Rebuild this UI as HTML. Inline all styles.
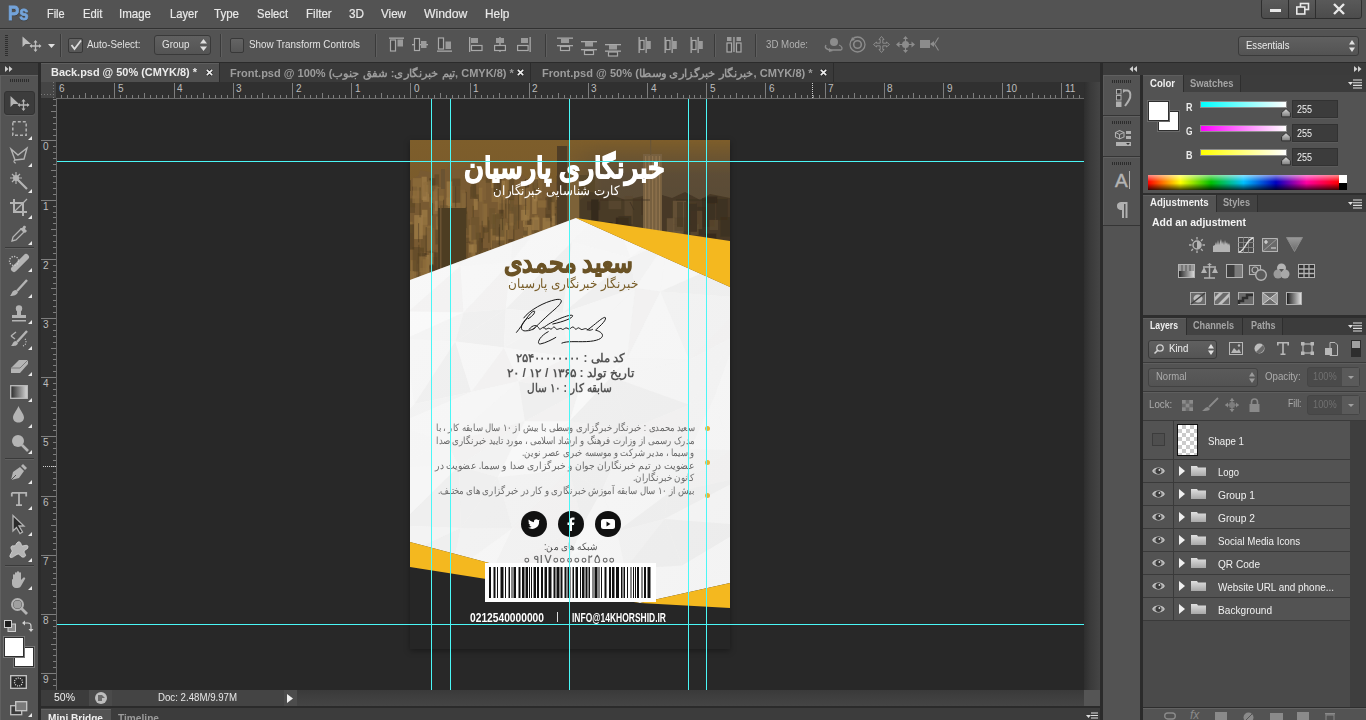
<!DOCTYPE html>
<html><head><meta charset="utf-8">
<style>
*{margin:0;padding:0;box-sizing:border-box}
html,body{width:1366px;height:720px;overflow:hidden;background:#535353;font-family:"Liberation Sans",sans-serif;color:#e6e6e6}
.a{position:absolute}
.t{position:absolute;white-space:nowrap;font-size:12px;line-height:14px}
svg.s{position:absolute;overflow:visible}
</style></head><body>
<div class="a" style="left:0px;top:0px;width:1366px;height:28px;background:#535353;"></div>
<div class="t" style="left:7.5px;top:1.5px;font-size:20px;line-height:23px;color:#74a4da;font-weight:bold;transform:scaleX(0.838);transform-origin:0 0;-webkit-text-stroke:0.8px #74a4da;text-shadow:0 1px 1px #333">Ps</div>
<div class="t" style="left:47px;top:7px;font-size:13px;line-height:14px;color:#e8e8e8;transform:scaleX(0.840);transform-origin:0 0;-webkit-text-stroke:0.2px #e8e8e8">File</div>
<div class="t" style="left:82.5px;top:7px;font-size:13px;line-height:14px;color:#e8e8e8;transform:scaleX(0.866);transform-origin:0 0;-webkit-text-stroke:0.2px #e8e8e8">Edit</div>
<div class="t" style="left:119px;top:7px;font-size:13px;line-height:14px;color:#e8e8e8;transform:scaleX(0.886);transform-origin:0 0;-webkit-text-stroke:0.2px #e8e8e8">Image</div>
<div class="t" style="left:169.5px;top:7px;font-size:13px;line-height:14px;color:#e8e8e8;transform:scaleX(0.861);transform-origin:0 0;-webkit-text-stroke:0.2px #e8e8e8">Layer</div>
<div class="t" style="left:214px;top:7px;font-size:13px;line-height:14px;color:#e8e8e8;transform:scaleX(0.887);transform-origin:0 0;-webkit-text-stroke:0.2px #e8e8e8">Type</div>
<div class="t" style="left:257px;top:7px;font-size:13px;line-height:14px;color:#e8e8e8;transform:scaleX(0.858);transform-origin:0 0;-webkit-text-stroke:0.2px #e8e8e8">Select</div>
<div class="t" style="left:306.3px;top:7px;font-size:13px;line-height:14px;color:#e8e8e8;transform:scaleX(0.890);transform-origin:0 0;-webkit-text-stroke:0.2px #e8e8e8">Filter</div>
<div class="t" style="left:349px;top:7px;font-size:13px;line-height:14px;color:#e8e8e8;transform:scaleX(0.903);transform-origin:0 0;-webkit-text-stroke:0.2px #e8e8e8">3D</div>
<div class="t" style="left:381px;top:7px;font-size:13px;line-height:14px;color:#e8e8e8;transform:scaleX(0.895);transform-origin:0 0;-webkit-text-stroke:0.2px #e8e8e8">View</div>
<div class="t" style="left:424px;top:7px;font-size:13px;line-height:14px;color:#e8e8e8;transform:scaleX(0.939);transform-origin:0 0;-webkit-text-stroke:0.2px #e8e8e8">Window</div>
<div class="t" style="left:485.3px;top:7px;font-size:13px;line-height:14px;color:#e8e8e8;transform:scaleX(0.913);transform-origin:0 0;-webkit-text-stroke:0.2px #e8e8e8">Help</div>
<div class="a" style="left:1261px;top:-2px;width:101px;height:21px;border:1px solid #2e2e2e;border-radius:3px;background:linear-gradient(#5a5a5a,#4c4c4c)"></div>
<div class="a" style="left:1288px;top:0px;width:1px;height:18px;background:#2e2e2e;"></div>
<div class="a" style="left:1315px;top:0px;width:1px;height:18px;background:#2e2e2e;"></div>
<div class="a" style="left:1270px;top:9px;width:11px;height:3px;background:#e8e8e8;"></div>
<svg class="s" style="left:1296px;top:3px;" width="13" height="12" viewBox="0 0 13 12"><rect x="4.5" y="0.5" width="8" height="6" fill="none" stroke="#e8e8e8" stroke-width="1.6"/><rect x="0.8" y="4" width="8" height="7" fill="#4f4f4f" stroke="#e8e8e8" stroke-width="1.6"/></svg>
<svg class="s" style="left:1333px;top:4px;" width="12" height="10" viewBox="0 0 12 10"><path d="M1 0L11 10M11 0L1 10" stroke="#e8e8e8" stroke-width="2.4"/></svg>
<div class="a" style="left:0px;top:28px;width:1366px;height:1px;background:#323232;"></div>
<div class="a" style="left:0px;top:29px;width:1366px;height:33px;background:#535353;border-top:1px solid #5e5e5e"></div>
<div class="a" style="left:0px;top:62px;width:1366px;height:1px;background:#2b2b2b;"></div>
<svg class="s" style="left:5px;top:35px;" width="3" height="22" viewBox="0 0 3 22"><rect x="0" y="0" width="3" height="1" fill="#2e2e2e"/><rect x="0" y="2" width="3" height="1" fill="#2e2e2e"/><rect x="0" y="4" width="3" height="1" fill="#2e2e2e"/><rect x="0" y="6" width="3" height="1" fill="#2e2e2e"/><rect x="0" y="8" width="3" height="1" fill="#2e2e2e"/><rect x="0" y="10" width="3" height="1" fill="#2e2e2e"/><rect x="0" y="12" width="3" height="1" fill="#2e2e2e"/><rect x="0" y="14" width="3" height="1" fill="#2e2e2e"/><rect x="0" y="16" width="3" height="1" fill="#2e2e2e"/><rect x="0" y="18" width="3" height="1" fill="#2e2e2e"/><rect x="0" y="20" width="3" height="1" fill="#2e2e2e"/></svg>
<svg class="s" style="left:22px;top:36px;" width="20" height="16" viewBox="0 0 20 16"><path d="M0.5 0.5L0.5 11L3.5 8L9 8Z" fill="#bdbdbd"/><path d="M13.5 5V15M8.5 10H18.5" stroke="#bdbdbd" stroke-width="1.3"/><path d="M13.5 4L11.5 6.5H15.5ZM13.5 16L11.5 13.5H15.5ZM7.5 10L10 8V12ZM19.5 10L17 8V12Z" fill="#bdbdbd"/></svg>
<svg class="s" style="left:48px;top:44px;" width="7" height="4" viewBox="0 0 7 4"><path d="M0 0H7L3.5 4Z" fill="#e0e0e0"/></svg>
<div class="a" style="left:60px;top:34px;width:1px;height:23px;background:#3a3a3a;box-shadow:1px 0 0 #5f5f5f"></div>
<div class="a" style="left:220px;top:34px;width:1px;height:23px;background:#3a3a3a;box-shadow:1px 0 0 #5f5f5f"></div>
<div class="a" style="left:375px;top:34px;width:1px;height:23px;background:#3a3a3a;box-shadow:1px 0 0 #5f5f5f"></div>
<div class="a" style="left:545px;top:34px;width:1px;height:23px;background:#3a3a3a;box-shadow:1px 0 0 #5f5f5f"></div>
<div class="a" style="left:714px;top:34px;width:1px;height:23px;background:#3a3a3a;box-shadow:1px 0 0 #5f5f5f"></div>
<div class="a" style="left:755px;top:34px;width:1px;height:23px;background:#3a3a3a;box-shadow:1px 0 0 #5f5f5f"></div>
<div class="a" style="left:68px;top:38px;width:15px;height:15px;background:linear-gradient(#646464,#565656);border:1px solid #383838;border-radius:2px"></div>
<svg class="s" style="left:70px;top:39px;" width="12" height="12" viewBox="0 0 12 12"><path d="M1.5 6L4.5 10L11 1.5" fill="none" stroke="#dcdcdc" stroke-width="1.8"/></svg>
<div class="t" style="left:87px;top:37.86px;font-size:10.5px;line-height:13px;color:#e2e2e2;transform:scaleX(0.935);transform-origin:0 0;">Auto-Select:</div>
<div class="a" style="left:154px;top:35px;width:57px;height:20px;background:linear-gradient(#606060,#545454);border:1px solid #393939;border-radius:3px"></div>
<div class="t" style="left:162px;top:37.86px;font-size:10.5px;line-height:13px;color:#e2e2e2;transform:scaleX(0.942);transform-origin:0 0;">Group</div>
<svg class="s" style="left:200px;top:39px;" width="7" height="12" viewBox="0 0 7 12"><path d="M0 4.5L3.5 0L7 4.5ZM0 7.5L3.5 12L7 7.5Z" fill="#e0e0e0"/></svg>
<div class="a" style="left:230px;top:38px;width:14px;height:15px;background:linear-gradient(#646464,#565656);border:1px solid #383838;border-radius:2px"></div>
<div class="t" style="left:249px;top:37.86px;font-size:10.5px;line-height:13px;color:#e2e2e2;transform:scaleX(0.937);transform-origin:0 0;">Show Transform Controls</div>
<svg class="s" style="left:389px;top:37px;" width="15" height="15" viewBox="0 0 15 15"><rect x="0" y="0.5" width="15" height="1.3" fill="#a9a9a9"/><rect x="1.5" y="3" width="5" height="11" fill="#474747" stroke="#a9a9a9" stroke-width="1.2"/><rect x="8.5" y="2.5" width="5.5" height="7" fill="#9a9a9a"/></svg>
<svg class="s" style="left:412px;top:37px;" width="16" height="15" viewBox="0 0 16 15"><rect x="0" y="7" width="16" height="1.3" fill="#a9a9a9"/><rect x="2.5" y="1.5" width="5" height="12" fill="#474747" stroke="#a9a9a9" stroke-width="1.2"/><rect x="9" y="4" width="5.5" height="7" fill="#9a9a9a"/></svg>
<svg class="s" style="left:437px;top:37px;" width="15" height="15" viewBox="0 0 15 15"><rect x="0" y="13.5" width="15" height="1.3" fill="#a9a9a9"/><rect x="1.5" y="1" width="5" height="11" fill="#474747" stroke="#a9a9a9" stroke-width="1.2"/><rect x="8.5" y="4.5" width="5.5" height="7.5" fill="#9a9a9a"/></svg>
<svg class="s" style="left:469px;top:37px;" width="14" height="15" viewBox="0 0 14 15"><rect x="0" y="0" width="1.3" height="15" fill="#a9a9a9"/><rect x="2" y="1" width="7" height="5" fill="#9a9a9a"/><rect x="2.5" y="8.5" width="10.5" height="5" fill="#474747" stroke="#a9a9a9" stroke-width="1.2"/></svg>
<svg class="s" style="left:494px;top:37px;" width="12" height="15" viewBox="0 0 12 15"><rect x="5.3" y="0" width="1.3" height="15" fill="#a9a9a9"/><rect x="2" y="1" width="8" height="5" fill="#9a9a9a"/><rect x="0.6" y="8.5" width="10.8" height="5" fill="#474747" stroke="#a9a9a9" stroke-width="1.2"/></svg>
<svg class="s" style="left:517px;top:37px;" width="14" height="15" viewBox="0 0 14 15"><rect x="12.5" y="0" width="1.3" height="15" fill="#a9a9a9"/><rect x="4" y="1" width="7" height="5" fill="#9a9a9a"/><rect x="0.6" y="8.5" width="10.5" height="5" fill="#474747" stroke="#a9a9a9" stroke-width="1.2"/></svg>
<svg class="s" style="left:557px;top:37px;" width="16" height="15" viewBox="0 0 16 15"><rect x="0" y="0.5" width="16" height="1.3" fill="#a9a9a9"/><rect x="4" y="1.5" width="8" height="4.5" fill="#9a9a9a"/><rect x="0" y="8" width="16" height="1.3" fill="#a9a9a9"/><rect x="3.5" y="9.5" width="9" height="4" fill="#474747" stroke="#a9a9a9" stroke-width="1.2"/></svg>
<svg class="s" style="left:581px;top:37px;" width="16" height="15" viewBox="0 0 16 15"><rect x="0" y="4" width="16" height="1.3" fill="#a9a9a9"/><rect x="4" y="5" width="8" height="4.5" fill="#9a9a9a"/><rect x="0" y="12" width="16" height="1.3" fill="#a9a9a9"/><rect x="3.5" y="13.5" width="9" height="4" fill="#474747" stroke="#a9a9a9" stroke-width="1.2"/></svg>
<svg class="s" style="left:605px;top:37px;" width="16" height="15" viewBox="0 0 16 15"><rect x="0" y="7" width="16" height="1.3" fill="#a9a9a9"/><rect x="4" y="8" width="8" height="4.5" fill="#9a9a9a"/><rect x="0" y="13.5" width="16" height="1.3" fill="#a9a9a9"/><rect x="3.5" y="15.0" width="9" height="4" fill="#474747" stroke="#a9a9a9" stroke-width="1.2"/></svg>
<svg class="s" style="left:638px;top:37px;" width="14" height="16" viewBox="0 0 14 16"><rect x="0.5" y="0" width="1.3" height="16" fill="#a9a9a9"/><rect x="2.0" y="3.5" width="4" height="9" fill="#474747" stroke="#a9a9a9" stroke-width="1.2"/><rect x="7.5" y="0" width="1.3" height="16" fill="#a9a9a9"/><rect x="8.8" y="4" width="4" height="8" fill="#9a9a9a"/></svg>
<svg class="s" style="left:662px;top:37px;" width="14" height="16" viewBox="0 0 14 16"><rect x="2.5" y="0" width="1.3" height="16" fill="#a9a9a9"/><rect x="4.0" y="3.5" width="4" height="9" fill="#474747" stroke="#a9a9a9" stroke-width="1.2"/><rect x="9.5" y="0" width="1.3" height="16" fill="#a9a9a9"/><rect x="10.8" y="4" width="4" height="8" fill="#9a9a9a"/></svg>
<svg class="s" style="left:686px;top:37px;" width="14" height="16" viewBox="0 0 14 16"><rect x="4.5" y="0" width="1.3" height="16" fill="#a9a9a9"/><rect x="6.0" y="3.5" width="4" height="9" fill="#474747" stroke="#a9a9a9" stroke-width="1.2"/><rect x="11.5" y="0" width="1.3" height="16" fill="#a9a9a9"/><rect x="12.8" y="4" width="4" height="8" fill="#9a9a9a"/></svg>
<svg class="s" style="left:726px;top:36px;" width="16" height="17" viewBox="0 0 16 17"><rect x="1" y="1" width="4.5" height="4" fill="#9a9a9a"/><rect x="1" y="7" width="4.5" height="9" fill="#474747" stroke="#a9a9a9" stroke-width="1.2"/><rect x="7.3" y="1" width="1.3" height="15" fill="#a9a9a9"/><rect x="10.5" y="1" width="4.5" height="4" fill="#9a9a9a"/><rect x="10.5" y="7" width="4.5" height="9" fill="#474747" stroke="#a9a9a9" stroke-width="1.2"/></svg>
<div class="t" style="left:766px;top:37.86px;font-size:10.5px;line-height:13px;color:#b0b0b0;transform:scaleX(0.923);transform-origin:0 0;">3D Mode:</div>
<svg class="s" style="left:824px;top:37px;" width="19" height="15" viewBox="0 0 19 15"><circle cx="10" cy="5" r="4" fill="#8c8c8c"/><path d="M2 8C0 11 3 13 8 13L17 13C19 12 18 9 15 8" fill="none" stroke="#8c8c8c" stroke-width="1.3"/><path d="M5 11L9 14L5 15Z" fill="#8c8c8c"/></svg>
<svg class="s" style="left:849px;top:36px;" width="17" height="17" viewBox="0 0 17 17"><circle cx="8.5" cy="8.5" r="7.5" fill="none" stroke="#8c8c8c" stroke-width="1.3"/><circle cx="8.5" cy="8.5" r="3.8" fill="none" stroke="#8c8c8c" stroke-width="1.6"/><path d="M3 1L6 4L2 5Z" fill="#8c8c8c"/></svg>
<svg class="s" style="left:873px;top:36px;" width="17" height="17" viewBox="0 0 17 17"><path d="M8.5 0.5L11 3.5H9.8V7.2H13.5V6L16.5 8.5L13.5 11V9.8H9.8V13.5H11L8.5 16.5L6 13.5H7.2V9.8H3.5V11L0.5 8.5L3.5 6V7.2H7.2V3.5H6Z" fill="none" stroke="#8c8c8c" stroke-width="1"/></svg>
<svg class="s" style="left:896px;top:36px;" width="19" height="17" viewBox="0 0 19 17"><circle cx="9.5" cy="8.5" r="3.5" fill="#8c8c8c"/><path d="M9.5 0L12 3H7ZM9.5 17L12 14H7ZM0 8.5L3.5 5.5V11.5ZM19 8.5L15.5 5.5V11.5Z" fill="#8c8c8c"/><path d="M3 8.5H16M9.5 2V15" stroke="#8c8c8c" stroke-width="1.2"/></svg>
<svg class="s" style="left:920px;top:37px;" width="19" height="15" viewBox="0 0 19 15"><rect x="0" y="3" width="10" height="8" fill="#8c8c8c"/><path d="M10 7L14 4V10Z" fill="#8c8c8c"/><path d="M18.5 0.5L14.5 7L18.5 13.5" fill="none" stroke="#8c8c8c" stroke-width="1.1"/></svg>
<div class="a" style="left:1238px;top:36px;width:121px;height:20px;background:linear-gradient(#606060,#535353);border:1px solid #3a3a3a;border-radius:3px"></div>
<div class="t" style="left:1246px;top:38.86px;font-size:10.5px;line-height:13px;color:#ececec;transform:scaleX(0.909);transform-origin:0 0;">Essentials</div>
<svg class="s" style="left:1349px;top:40px;" width="6" height="12" viewBox="0 0 6 12"><path d="M0 4.5L3 0L6 4.5ZM0 7.5L3 12L6 7.5Z" fill="#e0e0e0"/></svg>
<div class="a" style="left:38px;top:63px;width:3px;height:657px;background:#2b2b2b;"></div>
<div class="a" style="left:1100px;top:63px;width:3px;height:657px;background:#2b2b2b;"></div>
<div class="a" style="left:41px;top:63px;width:1059px;height:19px;background:#3a3a3a;"></div>
<div class="a" style="left:41px;top:63px;width:178px;height:19px;background:#505050;border-top:1px solid #5e5e5e"></div>
<div class="a" style="left:219px;top:63px;width:1px;height:19px;background:#2c2c2c;"></div>
<div class="a" style="left:530px;top:63px;width:1px;height:19px;background:#2c2c2c;"></div>
<div class="a" style="left:833px;top:63px;width:1px;height:19px;background:#2c2c2c;"></div>
<div class="t" style="left:51px;top:66.36px;font-size:10.5px;line-height:13px;color:#ececec;font-weight:bold;transform:scaleX(1.040);transform-origin:0 0;">Back.psd @ 50% (CMYK/8) *</div>
<svg class="s" style="left:205.5px;top:69px;" width="7" height="7" viewBox="0 0 7 7"><path d="M0.8 0.8L6.2 6.2M6.2 0.8L0.8 6.2" stroke="#1e1e1e" stroke-width="3"/><path d="M0.8 0.8L6.2 6.2M6.2 0.8L0.8 6.2" stroke="#eeeeee" stroke-width="1.7"/></svg>
<div class="t" style="left:230px;top:67.3px;font-size:10.5px;line-height:12px;color:#9c9c9c;font-weight:bold;transform:scaleX(1.047);transform-origin:0 0">Front.psd @ 100% (تیم خبرنگاری: شفق جنوب, CMYK/8) *</div>
<svg class="s" style="left:517px;top:69px;" width="7" height="7" viewBox="0 0 7 7"><path d="M0.8 0.8L6.2 6.2M6.2 0.8L0.8 6.2" stroke="#1e1e1e" stroke-width="3"/><path d="M0.8 0.8L6.2 6.2M6.2 0.8L0.8 6.2" stroke="#eeeeee" stroke-width="1.7"/></svg>
<div class="t" style="left:542px;top:67.3px;font-size:10.5px;line-height:12px;color:#9c9c9c;font-weight:bold;transform:scaleX(1.054);transform-origin:0 0">Front.psd @ 50% (خبرنگار خبرگزاری وسطا, CMYK/8) *</div>
<svg class="s" style="left:820px;top:69px;" width="7" height="7" viewBox="0 0 7 7"><path d="M0.8 0.8L6.2 6.2M6.2 0.8L0.8 6.2" stroke="#1e1e1e" stroke-width="3"/><path d="M0.8 0.8L6.2 6.2M6.2 0.8L0.8 6.2" stroke="#eeeeee" stroke-width="1.7"/></svg>
<div class="a" style="left:41px;top:82px;width:1043px;height:16px;background:#303030;"></div>
<div class="a" style="left:41px;top:98px;width:15px;height:592px;background:#303030;"></div>
<div class="a" style="left:56px;top:98px;width:1028px;height:1px;background:#6a6a6a;"></div>
<div class="a" style="left:56px;top:98px;width:1px;height:592px;background:#6a6a6a;"></div>
<div class="a" style="left:41px;top:82px;width:15px;height:16px;background:#454545;"></div>
<svg class="s" style="left:41px;top:82px;" width="15" height="16" viewBox="0 0 15 16"><path d="M0 12.5H15M12.5 0V16" stroke="#7a7a7a" stroke-width="1" stroke-dasharray="1 2"/></svg>
<svg class="s" style="left:56px;top:82px;" width="1028" height="16" viewBox="0 0 1028 16"><rect x="5" y="13" width="1" height="3" fill="#7e7e7e"/><rect x="11" y="13" width="1" height="3" fill="#7e7e7e"/><rect x="17" y="13" width="1" height="3" fill="#7e7e7e"/><rect x="23" y="13" width="1" height="3" fill="#7e7e7e"/><rect x="29" y="11" width="1" height="5" fill="#7e7e7e"/><rect x="35" y="13" width="1" height="3" fill="#7e7e7e"/><rect x="41" y="13" width="1" height="3" fill="#7e7e7e"/><rect x="47" y="13" width="1" height="3" fill="#7e7e7e"/><rect x="53" y="13" width="1" height="3" fill="#7e7e7e"/><rect x="58" y="1" width="1" height="15" fill="#7e7e7e"/><rect x="64" y="13" width="1" height="3" fill="#7e7e7e"/><rect x="70" y="13" width="1" height="3" fill="#7e7e7e"/><rect x="76" y="13" width="1" height="3" fill="#7e7e7e"/><rect x="82" y="13" width="1" height="3" fill="#7e7e7e"/><rect x="88" y="11" width="1" height="5" fill="#7e7e7e"/><rect x="94" y="13" width="1" height="3" fill="#7e7e7e"/><rect x="100" y="13" width="1" height="3" fill="#7e7e7e"/><rect x="106" y="13" width="1" height="3" fill="#7e7e7e"/><rect x="112" y="13" width="1" height="3" fill="#7e7e7e"/><rect x="118" y="1" width="1" height="15" fill="#7e7e7e"/><rect x="124" y="13" width="1" height="3" fill="#7e7e7e"/><rect x="130" y="13" width="1" height="3" fill="#7e7e7e"/><rect x="135" y="13" width="1" height="3" fill="#7e7e7e"/><rect x="141" y="13" width="1" height="3" fill="#7e7e7e"/><rect x="147" y="11" width="1" height="5" fill="#7e7e7e"/><rect x="153" y="13" width="1" height="3" fill="#7e7e7e"/><rect x="159" y="13" width="1" height="3" fill="#7e7e7e"/><rect x="165" y="13" width="1" height="3" fill="#7e7e7e"/><rect x="171" y="13" width="1" height="3" fill="#7e7e7e"/><rect x="177" y="1" width="1" height="15" fill="#7e7e7e"/><rect x="183" y="13" width="1" height="3" fill="#7e7e7e"/><rect x="189" y="13" width="1" height="3" fill="#7e7e7e"/><rect x="195" y="13" width="1" height="3" fill="#7e7e7e"/><rect x="201" y="13" width="1" height="3" fill="#7e7e7e"/><rect x="206" y="11" width="1" height="5" fill="#7e7e7e"/><rect x="212" y="13" width="1" height="3" fill="#7e7e7e"/><rect x="218" y="13" width="1" height="3" fill="#7e7e7e"/><rect x="224" y="13" width="1" height="3" fill="#7e7e7e"/><rect x="230" y="13" width="1" height="3" fill="#7e7e7e"/><rect x="236" y="1" width="1" height="15" fill="#7e7e7e"/><rect x="242" y="13" width="1" height="3" fill="#7e7e7e"/><rect x="248" y="13" width="1" height="3" fill="#7e7e7e"/><rect x="254" y="13" width="1" height="3" fill="#7e7e7e"/><rect x="260" y="13" width="1" height="3" fill="#7e7e7e"/><rect x="266" y="11" width="1" height="5" fill="#7e7e7e"/><rect x="272" y="13" width="1" height="3" fill="#7e7e7e"/><rect x="277" y="13" width="1" height="3" fill="#7e7e7e"/><rect x="283" y="13" width="1" height="3" fill="#7e7e7e"/><rect x="289" y="13" width="1" height="3" fill="#7e7e7e"/><rect x="295" y="1" width="1" height="15" fill="#7e7e7e"/><rect x="301" y="13" width="1" height="3" fill="#7e7e7e"/><rect x="307" y="13" width="1" height="3" fill="#7e7e7e"/><rect x="313" y="13" width="1" height="3" fill="#7e7e7e"/><rect x="319" y="13" width="1" height="3" fill="#7e7e7e"/><rect x="325" y="11" width="1" height="5" fill="#7e7e7e"/><rect x="331" y="13" width="1" height="3" fill="#7e7e7e"/><rect x="337" y="13" width="1" height="3" fill="#7e7e7e"/><rect x="343" y="13" width="1" height="3" fill="#7e7e7e"/><rect x="348" y="13" width="1" height="3" fill="#7e7e7e"/><rect x="354" y="1" width="1" height="15" fill="#7e7e7e"/><rect x="360" y="13" width="1" height="3" fill="#7e7e7e"/><rect x="366" y="13" width="1" height="3" fill="#7e7e7e"/><rect x="372" y="13" width="1" height="3" fill="#7e7e7e"/><rect x="378" y="13" width="1" height="3" fill="#7e7e7e"/><rect x="384" y="11" width="1" height="5" fill="#7e7e7e"/><rect x="390" y="13" width="1" height="3" fill="#7e7e7e"/><rect x="396" y="13" width="1" height="3" fill="#7e7e7e"/><rect x="402" y="13" width="1" height="3" fill="#7e7e7e"/><rect x="408" y="13" width="1" height="3" fill="#7e7e7e"/><rect x="414" y="1" width="1" height="15" fill="#7e7e7e"/><rect x="419" y="13" width="1" height="3" fill="#7e7e7e"/><rect x="425" y="13" width="1" height="3" fill="#7e7e7e"/><rect x="431" y="13" width="1" height="3" fill="#7e7e7e"/><rect x="437" y="13" width="1" height="3" fill="#7e7e7e"/><rect x="443" y="11" width="1" height="5" fill="#7e7e7e"/><rect x="449" y="13" width="1" height="3" fill="#7e7e7e"/><rect x="455" y="13" width="1" height="3" fill="#7e7e7e"/><rect x="461" y="13" width="1" height="3" fill="#7e7e7e"/><rect x="467" y="13" width="1" height="3" fill="#7e7e7e"/><rect x="473" y="1" width="1" height="15" fill="#7e7e7e"/><rect x="479" y="13" width="1" height="3" fill="#7e7e7e"/><rect x="485" y="13" width="1" height="3" fill="#7e7e7e"/><rect x="491" y="13" width="1" height="3" fill="#7e7e7e"/><rect x="496" y="13" width="1" height="3" fill="#7e7e7e"/><rect x="502" y="11" width="1" height="5" fill="#7e7e7e"/><rect x="508" y="13" width="1" height="3" fill="#7e7e7e"/><rect x="514" y="13" width="1" height="3" fill="#7e7e7e"/><rect x="520" y="13" width="1" height="3" fill="#7e7e7e"/><rect x="526" y="13" width="1" height="3" fill="#7e7e7e"/><rect x="532" y="1" width="1" height="15" fill="#7e7e7e"/><rect x="538" y="13" width="1" height="3" fill="#7e7e7e"/><rect x="544" y="13" width="1" height="3" fill="#7e7e7e"/><rect x="550" y="13" width="1" height="3" fill="#7e7e7e"/><rect x="556" y="13" width="1" height="3" fill="#7e7e7e"/><rect x="562" y="11" width="1" height="5" fill="#7e7e7e"/><rect x="567" y="13" width="1" height="3" fill="#7e7e7e"/><rect x="573" y="13" width="1" height="3" fill="#7e7e7e"/><rect x="579" y="13" width="1" height="3" fill="#7e7e7e"/><rect x="585" y="13" width="1" height="3" fill="#7e7e7e"/><rect x="591" y="1" width="1" height="15" fill="#7e7e7e"/><rect x="597" y="13" width="1" height="3" fill="#7e7e7e"/><rect x="603" y="13" width="1" height="3" fill="#7e7e7e"/><rect x="609" y="13" width="1" height="3" fill="#7e7e7e"/><rect x="615" y="13" width="1" height="3" fill="#7e7e7e"/><rect x="621" y="11" width="1" height="5" fill="#7e7e7e"/><rect x="627" y="13" width="1" height="3" fill="#7e7e7e"/><rect x="633" y="13" width="1" height="3" fill="#7e7e7e"/><rect x="638" y="13" width="1" height="3" fill="#7e7e7e"/><rect x="644" y="13" width="1" height="3" fill="#7e7e7e"/><rect x="650" y="1" width="1" height="15" fill="#7e7e7e"/><rect x="656" y="13" width="1" height="3" fill="#7e7e7e"/><rect x="662" y="13" width="1" height="3" fill="#7e7e7e"/><rect x="668" y="13" width="1" height="3" fill="#7e7e7e"/><rect x="674" y="13" width="1" height="3" fill="#7e7e7e"/><rect x="680" y="11" width="1" height="5" fill="#7e7e7e"/><rect x="686" y="13" width="1" height="3" fill="#7e7e7e"/><rect x="692" y="13" width="1" height="3" fill="#7e7e7e"/><rect x="698" y="13" width="1" height="3" fill="#7e7e7e"/><rect x="704" y="13" width="1" height="3" fill="#7e7e7e"/><rect x="709" y="1" width="1" height="15" fill="#7e7e7e"/><rect x="715" y="13" width="1" height="3" fill="#7e7e7e"/><rect x="721" y="13" width="1" height="3" fill="#7e7e7e"/><rect x="727" y="13" width="1" height="3" fill="#7e7e7e"/><rect x="733" y="13" width="1" height="3" fill="#7e7e7e"/><rect x="739" y="11" width="1" height="5" fill="#7e7e7e"/><rect x="745" y="13" width="1" height="3" fill="#7e7e7e"/><rect x="751" y="13" width="1" height="3" fill="#7e7e7e"/><rect x="757" y="13" width="1" height="3" fill="#7e7e7e"/><rect x="763" y="13" width="1" height="3" fill="#7e7e7e"/><rect x="769" y="1" width="1" height="15" fill="#7e7e7e"/><rect x="775" y="13" width="1" height="3" fill="#7e7e7e"/><rect x="780" y="13" width="1" height="3" fill="#7e7e7e"/><rect x="786" y="13" width="1" height="3" fill="#7e7e7e"/><rect x="792" y="13" width="1" height="3" fill="#7e7e7e"/><rect x="798" y="11" width="1" height="5" fill="#7e7e7e"/><rect x="804" y="13" width="1" height="3" fill="#7e7e7e"/><rect x="810" y="13" width="1" height="3" fill="#7e7e7e"/><rect x="816" y="13" width="1" height="3" fill="#7e7e7e"/><rect x="822" y="13" width="1" height="3" fill="#7e7e7e"/><rect x="828" y="1" width="1" height="15" fill="#7e7e7e"/><rect x="834" y="13" width="1" height="3" fill="#7e7e7e"/><rect x="840" y="13" width="1" height="3" fill="#7e7e7e"/><rect x="846" y="13" width="1" height="3" fill="#7e7e7e"/><rect x="852" y="13" width="1" height="3" fill="#7e7e7e"/><rect x="857" y="11" width="1" height="5" fill="#7e7e7e"/><rect x="863" y="13" width="1" height="3" fill="#7e7e7e"/><rect x="869" y="13" width="1" height="3" fill="#7e7e7e"/><rect x="875" y="13" width="1" height="3" fill="#7e7e7e"/><rect x="881" y="13" width="1" height="3" fill="#7e7e7e"/><rect x="887" y="1" width="1" height="15" fill="#7e7e7e"/><rect x="893" y="13" width="1" height="3" fill="#7e7e7e"/><rect x="899" y="13" width="1" height="3" fill="#7e7e7e"/><rect x="905" y="13" width="1" height="3" fill="#7e7e7e"/><rect x="911" y="13" width="1" height="3" fill="#7e7e7e"/><rect x="917" y="11" width="1" height="5" fill="#7e7e7e"/><rect x="923" y="13" width="1" height="3" fill="#7e7e7e"/><rect x="928" y="13" width="1" height="3" fill="#7e7e7e"/><rect x="934" y="13" width="1" height="3" fill="#7e7e7e"/><rect x="940" y="13" width="1" height="3" fill="#7e7e7e"/><rect x="946" y="1" width="1" height="15" fill="#7e7e7e"/><rect x="952" y="13" width="1" height="3" fill="#7e7e7e"/><rect x="958" y="13" width="1" height="3" fill="#7e7e7e"/><rect x="964" y="13" width="1" height="3" fill="#7e7e7e"/><rect x="970" y="13" width="1" height="3" fill="#7e7e7e"/><rect x="976" y="11" width="1" height="5" fill="#7e7e7e"/><rect x="982" y="13" width="1" height="3" fill="#7e7e7e"/><rect x="988" y="13" width="1" height="3" fill="#7e7e7e"/><rect x="994" y="13" width="1" height="3" fill="#7e7e7e"/><rect x="999" y="13" width="1" height="3" fill="#7e7e7e"/><rect x="1005" y="1" width="1" height="15" fill="#7e7e7e"/><rect x="1011" y="13" width="1" height="3" fill="#7e7e7e"/><rect x="1017" y="13" width="1" height="3" fill="#7e7e7e"/><rect x="1023" y="13" width="1" height="3" fill="#7e7e7e"/></svg>
<div class="t" style="left:59px;top:83px;font-size:10px;line-height:11px;color:#bcbcbc;">6</div>
<div class="t" style="left:118px;top:83px;font-size:10px;line-height:11px;color:#bcbcbc;">5</div>
<div class="t" style="left:177px;top:83px;font-size:10px;line-height:11px;color:#bcbcbc;">4</div>
<div class="t" style="left:236px;top:83px;font-size:10px;line-height:11px;color:#bcbcbc;">3</div>
<div class="t" style="left:296px;top:83px;font-size:10px;line-height:11px;color:#bcbcbc;">2</div>
<div class="t" style="left:355px;top:83px;font-size:10px;line-height:11px;color:#bcbcbc;">1</div>
<div class="t" style="left:414px;top:83px;font-size:10px;line-height:11px;color:#bcbcbc;">0</div>
<div class="t" style="left:473px;top:83px;font-size:10px;line-height:11px;color:#bcbcbc;">1</div>
<div class="t" style="left:532px;top:83px;font-size:10px;line-height:11px;color:#bcbcbc;">2</div>
<div class="t" style="left:591px;top:83px;font-size:10px;line-height:11px;color:#bcbcbc;">3</div>
<div class="t" style="left:651px;top:83px;font-size:10px;line-height:11px;color:#bcbcbc;">4</div>
<div class="t" style="left:710px;top:83px;font-size:10px;line-height:11px;color:#bcbcbc;">5</div>
<div class="t" style="left:769px;top:83px;font-size:10px;line-height:11px;color:#bcbcbc;">6</div>
<div class="t" style="left:828px;top:83px;font-size:10px;line-height:11px;color:#bcbcbc;">7</div>
<div class="t" style="left:887px;top:83px;font-size:10px;line-height:11px;color:#bcbcbc;">8</div>
<div class="t" style="left:947px;top:83px;font-size:10px;line-height:11px;color:#bcbcbc;">9</div>
<div class="t" style="left:1006px;top:83px;font-size:10px;line-height:11px;color:#bcbcbc;">10</div>
<div class="t" style="left:1065px;top:83px;font-size:10px;line-height:11px;color:#bcbcbc;">11</div>
<svg class="s" style="left:41px;top:98px;" width="15" height="592" viewBox="0 0 15 592"><rect x="12" y="1" width="3" height="1" fill="#7e7e7e"/><rect x="12" y="7" width="3" height="1" fill="#7e7e7e"/><rect x="10" y="13" width="5" height="1" fill="#7e7e7e"/><rect x="12" y="19" width="3" height="1" fill="#7e7e7e"/><rect x="12" y="25" width="3" height="1" fill="#7e7e7e"/><rect x="12" y="31" width="3" height="1" fill="#7e7e7e"/><rect x="12" y="37" width="3" height="1" fill="#7e7e7e"/><rect x="0" y="42" width="15" height="1" fill="#7e7e7e"/><rect x="12" y="48" width="3" height="1" fill="#7e7e7e"/><rect x="12" y="54" width="3" height="1" fill="#7e7e7e"/><rect x="12" y="60" width="3" height="1" fill="#7e7e7e"/><rect x="12" y="66" width="3" height="1" fill="#7e7e7e"/><rect x="10" y="72" width="5" height="1" fill="#7e7e7e"/><rect x="12" y="78" width="3" height="1" fill="#7e7e7e"/><rect x="12" y="84" width="3" height="1" fill="#7e7e7e"/><rect x="12" y="90" width="3" height="1" fill="#7e7e7e"/><rect x="12" y="96" width="3" height="1" fill="#7e7e7e"/><rect x="0" y="102" width="15" height="1" fill="#7e7e7e"/><rect x="12" y="108" width="3" height="1" fill="#7e7e7e"/><rect x="12" y="114" width="3" height="1" fill="#7e7e7e"/><rect x="12" y="119" width="3" height="1" fill="#7e7e7e"/><rect x="12" y="125" width="3" height="1" fill="#7e7e7e"/><rect x="10" y="131" width="5" height="1" fill="#7e7e7e"/><rect x="12" y="137" width="3" height="1" fill="#7e7e7e"/><rect x="12" y="143" width="3" height="1" fill="#7e7e7e"/><rect x="12" y="149" width="3" height="1" fill="#7e7e7e"/><rect x="12" y="155" width="3" height="1" fill="#7e7e7e"/><rect x="0" y="161" width="15" height="1" fill="#7e7e7e"/><rect x="12" y="167" width="3" height="1" fill="#7e7e7e"/><rect x="12" y="173" width="3" height="1" fill="#7e7e7e"/><rect x="12" y="179" width="3" height="1" fill="#7e7e7e"/><rect x="12" y="185" width="3" height="1" fill="#7e7e7e"/><rect x="10" y="190" width="5" height="1" fill="#7e7e7e"/><rect x="12" y="196" width="3" height="1" fill="#7e7e7e"/><rect x="12" y="202" width="3" height="1" fill="#7e7e7e"/><rect x="12" y="208" width="3" height="1" fill="#7e7e7e"/><rect x="12" y="214" width="3" height="1" fill="#7e7e7e"/><rect x="0" y="220" width="15" height="1" fill="#7e7e7e"/><rect x="12" y="226" width="3" height="1" fill="#7e7e7e"/><rect x="12" y="232" width="3" height="1" fill="#7e7e7e"/><rect x="12" y="238" width="3" height="1" fill="#7e7e7e"/><rect x="12" y="244" width="3" height="1" fill="#7e7e7e"/><rect x="10" y="250" width="5" height="1" fill="#7e7e7e"/><rect x="12" y="256" width="3" height="1" fill="#7e7e7e"/><rect x="12" y="261" width="3" height="1" fill="#7e7e7e"/><rect x="12" y="267" width="3" height="1" fill="#7e7e7e"/><rect x="12" y="273" width="3" height="1" fill="#7e7e7e"/><rect x="0" y="279" width="15" height="1" fill="#7e7e7e"/><rect x="12" y="285" width="3" height="1" fill="#7e7e7e"/><rect x="12" y="291" width="3" height="1" fill="#7e7e7e"/><rect x="12" y="297" width="3" height="1" fill="#7e7e7e"/><rect x="12" y="303" width="3" height="1" fill="#7e7e7e"/><rect x="10" y="309" width="5" height="1" fill="#7e7e7e"/><rect x="12" y="315" width="3" height="1" fill="#7e7e7e"/><rect x="12" y="321" width="3" height="1" fill="#7e7e7e"/><rect x="12" y="327" width="3" height="1" fill="#7e7e7e"/><rect x="12" y="332" width="3" height="1" fill="#7e7e7e"/><rect x="0" y="338" width="15" height="1" fill="#7e7e7e"/><rect x="12" y="344" width="3" height="1" fill="#7e7e7e"/><rect x="12" y="350" width="3" height="1" fill="#7e7e7e"/><rect x="12" y="356" width="3" height="1" fill="#7e7e7e"/><rect x="12" y="362" width="3" height="1" fill="#7e7e7e"/><rect x="10" y="368" width="5" height="1" fill="#7e7e7e"/><rect x="12" y="374" width="3" height="1" fill="#7e7e7e"/><rect x="12" y="380" width="3" height="1" fill="#7e7e7e"/><rect x="12" y="386" width="3" height="1" fill="#7e7e7e"/><rect x="12" y="392" width="3" height="1" fill="#7e7e7e"/><rect x="0" y="398" width="15" height="1" fill="#7e7e7e"/><rect x="12" y="403" width="3" height="1" fill="#7e7e7e"/><rect x="12" y="409" width="3" height="1" fill="#7e7e7e"/><rect x="12" y="415" width="3" height="1" fill="#7e7e7e"/><rect x="12" y="421" width="3" height="1" fill="#7e7e7e"/><rect x="10" y="427" width="5" height="1" fill="#7e7e7e"/><rect x="12" y="433" width="3" height="1" fill="#7e7e7e"/><rect x="12" y="439" width="3" height="1" fill="#7e7e7e"/><rect x="12" y="445" width="3" height="1" fill="#7e7e7e"/><rect x="12" y="451" width="3" height="1" fill="#7e7e7e"/><rect x="0" y="457" width="15" height="1" fill="#7e7e7e"/><rect x="12" y="463" width="3" height="1" fill="#7e7e7e"/><rect x="12" y="469" width="3" height="1" fill="#7e7e7e"/><rect x="12" y="475" width="3" height="1" fill="#7e7e7e"/><rect x="12" y="480" width="3" height="1" fill="#7e7e7e"/><rect x="10" y="486" width="5" height="1" fill="#7e7e7e"/><rect x="12" y="492" width="3" height="1" fill="#7e7e7e"/><rect x="12" y="498" width="3" height="1" fill="#7e7e7e"/><rect x="12" y="504" width="3" height="1" fill="#7e7e7e"/><rect x="12" y="510" width="3" height="1" fill="#7e7e7e"/><rect x="0" y="516" width="15" height="1" fill="#7e7e7e"/><rect x="12" y="522" width="3" height="1" fill="#7e7e7e"/><rect x="12" y="528" width="3" height="1" fill="#7e7e7e"/><rect x="12" y="534" width="3" height="1" fill="#7e7e7e"/><rect x="12" y="540" width="3" height="1" fill="#7e7e7e"/><rect x="10" y="546" width="5" height="1" fill="#7e7e7e"/><rect x="12" y="551" width="3" height="1" fill="#7e7e7e"/><rect x="12" y="557" width="3" height="1" fill="#7e7e7e"/><rect x="12" y="563" width="3" height="1" fill="#7e7e7e"/><rect x="12" y="569" width="3" height="1" fill="#7e7e7e"/><rect x="0" y="575" width="15" height="1" fill="#7e7e7e"/><rect x="12" y="581" width="3" height="1" fill="#7e7e7e"/><rect x="12" y="587" width="3" height="1" fill="#7e7e7e"/></svg>
<div class="t" style="left:43px;top:141px;font-size:10px;line-height:11px;color:#bcbcbc;">0</div>
<div class="t" style="left:43px;top:201px;font-size:10px;line-height:11px;color:#bcbcbc;">1</div>
<div class="t" style="left:43px;top:260px;font-size:10px;line-height:11px;color:#bcbcbc;">2</div>
<div class="t" style="left:43px;top:319px;font-size:10px;line-height:11px;color:#bcbcbc;">3</div>
<div class="t" style="left:43px;top:378px;font-size:10px;line-height:11px;color:#bcbcbc;">4</div>
<div class="t" style="left:43px;top:437px;font-size:10px;line-height:11px;color:#bcbcbc;">5</div>
<div class="t" style="left:43px;top:497px;font-size:10px;line-height:11px;color:#bcbcbc;">6</div>
<div class="t" style="left:43px;top:556px;font-size:10px;line-height:11px;color:#bcbcbc;">7</div>
<div class="t" style="left:43px;top:615px;font-size:10px;line-height:11px;color:#bcbcbc;">8</div>
<div class="t" style="left:43px;top:674px;font-size:10px;line-height:11px;color:#bcbcbc;">9</div>
<svg class="s" style="left:43px;top:466px;" width="13" height="1" viewBox="0 0 13 1"><path d="M0 0.5H13" stroke="#d0d0d0" stroke-dasharray="1 1"/></svg>
<svg class="s" style="left:812px;top:83px;" width="1" height="15" viewBox="0 0 1 15"><path d="M0.5 0V15" stroke="#d0d0d0" stroke-dasharray="1 1"/></svg>
<div class="a" style="left:57px;top:99px;width:1027px;height:591px;background:#282828;"></div>
<div class="a" style="left:1084px;top:82px;width:16px;height:608px;background:linear-gradient(90deg,#2e2e2e,#3a3a3a 40%,#454545);"></div>
<div class="a" style="left:297px;top:690px;width:787px;height:16px;background:linear-gradient(#3a3a3a,#454545);"></div>
<div class="a" style="left:1084px;top:690px;width:16px;height:16px;background:#555555;"></div>
<div class="a" style="left:41px;top:690px;width:256px;height:16px;background:#3c3c3c;"></div>
<div class="a" style="left:89px;top:690px;width:23px;height:16px;background:#4a4a4a;"></div>
<div class="a" style="left:112px;top:690px;width:172px;height:16px;background:#444444;"></div>
<div class="a" style="left:284px;top:690px;width:13px;height:16px;background:#4c4c4c;"></div>
<div class="t" style="left:54px;top:691.54px;font-size:10px;line-height:12px;color:#f0f0f0;transform:scaleX(1.049);transform-origin:0 0;">50%</div>
<svg class="s" style="left:95px;top:692px;" width="12" height="12" viewBox="0 0 12 12"><circle cx="6" cy="6" r="6" fill="#bdbdbd"/><path d="M3 9V3H7L10 6H7V9Z" fill="#6a6a6a"/></svg>
<div class="t" style="left:158px;top:691.54px;font-size:10px;line-height:12px;color:#e8e8e8;transform:scaleX(0.967);transform-origin:0 0;">Doc: 2.48M/9.97M</div>
<svg class="s" style="left:287px;top:694px;" width="6" height="9" viewBox="0 0 6 9"><path d="M0 0L6 4.5L0 9Z" fill="#f0f0f0"/></svg>
<div class="a" style="left:41px;top:706px;width:1059px;height:2px;background:#2b2b2b;"></div>
<div class="a" style="left:41px;top:708px;width:1059px;height:12px;background:#3c3c3c;"></div>
<div class="a" style="left:41px;top:709px;width:70px;height:11px;background:#535353;border-top:1px solid #606060"></div>
<div class="t" style="left:48px;top:711.69px;font-size:11px;line-height:13px;color:#f0f0f0;font-weight:bold;transform:scaleX(0.918);transform-origin:0 0;">Mini Bridge</div>
<div class="t" style="left:118px;top:711.69px;font-size:11px;line-height:13px;color:#9a9a9a;font-weight:bold;transform:scaleX(0.923);transform-origin:0 0;">Timeline</div>
<svg class="s" style="left:1086px;top:712px;" width="12" height="8" viewBox="0 0 12 8"><path d="M0 3H5L2.5 6Z" fill="#e0e0e0"/><path d="M5 1H12M5 3.5H12M5 6H12" stroke="#e0e0e0" stroke-width="1.2"/></svg>
<div class="a" style="left:0px;top:63px;width:38px;height:12px;background:#3b3b3b;"></div>
<svg class="s" style="left:5px;top:66px;" width="8" height="6" viewBox="0 0 8 6"><path d="M0 0L3.5 3L0 6ZM4 0L7.5 3L4 6Z" fill="#d0d0d0"/></svg>
<div class="a" style="left:0px;top:75px;width:38px;height:645px;background:#535353;border-left:1px solid #606060;border-top:1px solid #606060"></div>
<svg class="s" style="left:10px;top:79px;" width="20" height="3" viewBox="0 0 20 3"><rect x="0" y="0" width="1" height="3" fill="#2c2c2c"/><rect x="2" y="0" width="1" height="3" fill="#2c2c2c"/><rect x="4" y="0" width="1" height="3" fill="#2c2c2c"/><rect x="6" y="0" width="1" height="3" fill="#2c2c2c"/><rect x="8" y="0" width="1" height="3" fill="#2c2c2c"/><rect x="10" y="0" width="1" height="3" fill="#2c2c2c"/><rect x="12" y="0" width="1" height="3" fill="#2c2c2c"/><rect x="14" y="0" width="1" height="3" fill="#2c2c2c"/><rect x="16" y="0" width="1" height="3" fill="#2c2c2c"/><rect x="18" y="0" width="1" height="3" fill="#2c2c2c"/></svg>
<div class="a" style="left:4px;top:91px;width:31px;height:24px;background:#3c3c3c;border-radius:3px;border:1px solid #333;box-shadow:0 1px 0 #5e5e5e"></div>
<svg class="s" style="left:10px;top:96px;" width="19" height="14" viewBox="0 0 19 14"><path d="M0.5 0L0.5 11L3.5 8L9 8Z" fill="#b4b4b4"/><path d="M13.5 4V14M8.5 9H18.5" stroke="#b4b4b4" stroke-width="1.3"/><path d="M13.5 3L11.5 5.5H15.5ZM13.5 15L11.5 12.5H15.5ZM7.5 9L10 7V11ZM19.5 9L17 7V11Z" fill="#b4b4b4"/></svg>
<svg class="s" style="left:12px;top:121px;" width="15" height="15" viewBox="0 0 15 15"><rect x="0.8" y="0.8" width="13.4" height="13.4" fill="none" stroke="#b4b4b4" stroke-width="1.5" stroke-dasharray="3 2"/></svg>
<svg class="s" style="left:28px;top:136px;" width="4" height="4" viewBox="0 0 4 4"><path d="M4 0V4H0Z" fill="#e8e8e8"/></svg>
<svg class="s" style="left:10px;top:147px;" width="18" height="17" viewBox="0 0 18 17"><path d="M1 2L8 8L17 1L14 12L5 13Z" fill="none" stroke="#b4b4b4" stroke-width="1.4"/><path d="M5 13C3 14 4 16 6 16" fill="none" stroke="#b4b4b4" stroke-width="1.2"/></svg>
<svg class="s" style="left:28px;top:163px;" width="4" height="4" viewBox="0 0 4 4"><path d="M4 0V4H0Z" fill="#e8e8e8"/></svg>
<svg class="s" style="left:10px;top:172px;" width="19" height="19" viewBox="0 0 19 19"><path d="M6 6L17 17" stroke="#b4b4b4" stroke-width="2.2"/><path d="M6 0V12M0 6H12M2 2L10 10M10 2L2 10" stroke="#b4b4b4" stroke-width="1.2"/><circle cx="6" cy="6" r="3" fill="#b4b4b4"/></svg>
<svg class="s" style="left:28px;top:189px;" width="4" height="4" viewBox="0 0 4 4"><path d="M4 0V4H0Z" fill="#e8e8e8"/></svg>
<svg class="s" style="left:10px;top:199px;" width="18" height="17" viewBox="0 0 18 17"><path d="M4 0V13H17M0 4H13V17" fill="none" stroke="#b4b4b4" stroke-width="2"/><path d="M4 13L17 0" stroke="#b4b4b4" stroke-width="1.2"/></svg>
<svg class="s" style="left:28px;top:215px;" width="4" height="4" viewBox="0 0 4 4"><path d="M4 0V4H0Z" fill="#e8e8e8"/></svg>
<svg class="s" style="left:11px;top:225px;" width="17" height="17" viewBox="0 0 17 17"><path d="M1 16L2 12L10 4L13 7L5 15Z" fill="none" stroke="#b4b4b4" stroke-width="1.3"/><path d="M9 3L14 8L16 6L14 4L15 2C14 0 12 1 12 2L11 3Z" fill="#b4b4b4"/></svg>
<svg class="s" style="left:28px;top:241px;" width="4" height="4" viewBox="0 0 4 4"><path d="M4 0V4H0Z" fill="#e8e8e8"/></svg>
<div class="a" style="left:5px;top:247px;width:29px;height:1px;background:#3a3a3a;box-shadow:0 1px 0 #5f5f5f"></div>
<svg class="s" style="left:9px;top:254px;" width="20" height="17" viewBox="0 0 20 17"><path d="M5 15L17 3" stroke="#b4b4b4" stroke-width="6" stroke-linecap="round"/><circle cx="5" cy="7" r="4.5" fill="none" stroke="#cfcfcf" stroke-width="1.3" stroke-dasharray="1.2 1.4"/></svg>
<svg class="s" style="left:28px;top:268px;" width="4" height="4" viewBox="0 0 4 4"><path d="M4 0V4H0Z" fill="#e8e8e8"/></svg>
<svg class="s" style="left:9px;top:280px;" width="19" height="17" viewBox="0 0 19 17"><path d="M18 0L8 11" stroke="#b4b4b4" stroke-width="2.4"/><path d="M1 16C3 14 3 10 7 10L9 12C8 15 5 16 1 16Z" fill="#b4b4b4"/></svg>
<svg class="s" style="left:28px;top:294px;" width="4" height="4" viewBox="0 0 4 4"><path d="M4 0V4H0Z" fill="#e8e8e8"/></svg>
<svg class="s" style="left:11px;top:305px;" width="16" height="17" viewBox="0 0 16 17"><circle cx="8" cy="3.5" r="3.2" fill="#b4b4b4"/><rect x="6" y="5" width="4" height="5" fill="#b4b4b4"/><rect x="1" y="10" width="14" height="3" fill="#b4b4b4"/><rect x="1" y="15" width="14" height="1.5" fill="#b4b4b4"/></svg>
<svg class="s" style="left:28px;top:320px;" width="4" height="4" viewBox="0 0 4 4"><path d="M4 0V4H0Z" fill="#e8e8e8"/></svg>
<svg class="s" style="left:9px;top:331px;" width="20" height="17" viewBox="0 0 20 17"><path d="M18 0L8 11" stroke="#b4b4b4" stroke-width="2.4"/><path d="M2 15C4 13 4 10 7 10L9 12C8 15 6 15 2 15Z" fill="#b4b4b4"/><path d="M2 5L7 1M2 5L6 8" stroke="#b4b4b4" stroke-width="1.4" fill="none"/><path d="M16 8C18 10 17 14 14 15" fill="none" stroke="#cfcfcf" stroke-width="1.2" stroke-dasharray="1 1.5"/></svg>
<svg class="s" style="left:28px;top:346px;" width="4" height="4" viewBox="0 0 4 4"><path d="M4 0V4H0Z" fill="#e8e8e8"/></svg>
<svg class="s" style="left:10px;top:359px;" width="19" height="15" viewBox="0 0 19 15"><path d="M1 9L9 1H18L18 5L10 14H1Z" fill="#b4b4b4"/><path d="M1 9H10L18 1" fill="none" stroke="#7a7a7a" stroke-width="1"/></svg>
<svg class="s" style="left:28px;top:372px;" width="4" height="4" viewBox="0 0 4 4"><path d="M4 0V4H0Z" fill="#e8e8e8"/></svg>
<svg class="s" style="left:10px;top:385px;" width="18" height="14" viewBox="0 0 18 14"><defs><linearGradient id="gr1"><stop offset="0" stop-color="#2a2a2a"/><stop offset="1" stop-color="#d8d8d8"/></linearGradient></defs><rect x="0.7" y="0.7" width="16.6" height="12.6" fill="url(#gr1)" stroke="#bdbdbd" stroke-width="1.3"/></svg>
<svg class="s" style="left:28px;top:398px;" width="4" height="4" viewBox="0 0 4 4"><path d="M4 0V4H0Z" fill="#e8e8e8"/></svg>
<svg class="s" style="left:12px;top:406px;" width="13" height="17" viewBox="0 0 13 17"><path d="M6.5 0C5 4 1 8 1 11.5C1 14.5 3.5 16.5 6.5 16.5C9.5 16.5 12 14.5 12 11.5C12 8 8 4 6.5 0Z" fill="#b4b4b4"/></svg>
<svg class="s" style="left:28px;top:424px;" width="4" height="4" viewBox="0 0 4 4"><path d="M4 0V4H0Z" fill="#e8e8e8"/></svg>
<svg class="s" style="left:11px;top:434px;" width="18" height="18" viewBox="0 0 18 18"><circle cx="7" cy="7" r="6" fill="#b4b4b4"/><path d="M11 11L17 17" stroke="#b4b4b4" stroke-width="2.6"/></svg>
<svg class="s" style="left:28px;top:450px;" width="4" height="4" viewBox="0 0 4 4"><path d="M4 0V4H0Z" fill="#e8e8e8"/></svg>
<div class="a" style="left:5px;top:458px;width:29px;height:1px;background:#3a3a3a;box-shadow:0 1px 0 #5f5f5f"></div>
<svg class="s" style="left:10px;top:463px;" width="18" height="18" viewBox="0 0 18 18"><path d="M1 17L3 9L10 4L14 8L9 15Z" fill="#b4b4b4"/><path d="M11 3L13 1L17 5L15 7Z" fill="#b4b4b4"/><path d="M1 17L6 12" stroke="#535353" stroke-width="1"/></svg>
<svg class="s" style="left:28px;top:480px;" width="4" height="4" viewBox="0 0 4 4"><path d="M4 0V4H0Z" fill="#e8e8e8"/></svg>
<svg class="s" style="left:11px;top:492px;" width="16" height="14" viewBox="0 0 16 14"><path d="M0.8 0.8H15.2V4.5M0.8 0.8V4.5M8 0.8V13.2M5 13.2H11" fill="none" stroke="#b4b4b4" stroke-width="1.8"/></svg>
<svg class="s" style="left:28px;top:506px;" width="4" height="4" viewBox="0 0 4 4"><path d="M4 0V4H0Z" fill="#e8e8e8"/></svg>
<svg class="s" style="left:12px;top:515px;" width="13" height="19" viewBox="0 0 13 19"><path d="M1 0.5L1 16L4.5 12.5L8 18.5L10.5 17L7 11H12Z" fill="#2a2a2a" stroke="#b4b4b4" stroke-width="1.3"/></svg>
<svg class="s" style="left:28px;top:532px;" width="4" height="4" viewBox="0 0 4 4"><path d="M4 0V4H0Z" fill="#e8e8e8"/></svg>
<svg class="s" style="left:9px;top:541px;" width="20" height="18" viewBox="0 0 20 18"><path d="M9 1C12 0 12 4 13 5C15 5 19 3 19 6C19 9 15 8 15 11C16 13 18 15 15 16C12 17 11 13 9 13C6 14 3 18 1 16C0 14 4 11 3 9C1 7 2 4 5 5C7 5 7 2 9 1Z" fill="#b4b4b4" stroke="#d8d8d8" stroke-width="0.8"/></svg>
<svg class="s" style="left:28px;top:558px;" width="4" height="4" viewBox="0 0 4 4"><path d="M4 0V4H0Z" fill="#e8e8e8"/></svg>
<div class="a" style="left:5px;top:565px;width:29px;height:1px;background:#3a3a3a;box-shadow:0 1px 0 #5f5f5f"></div>
<svg class="s" style="left:10px;top:571px;" width="18" height="18" viewBox="0 0 18 18"><path d="M3 8V4C3 3 5 3 5 4V8V2C5 1 7 1 7 2V8V1C7 0 9 0 9 1V8V2C9 1 11 1 11 2V9L13 7C14 6 16 7 15 8L11 15C10 17 8 17 6 17C4 17 2 15 2 13V9C2 8 3 8 3 8Z" fill="#b4b4b4"/></svg>
<svg class="s" style="left:28px;top:586px;" width="4" height="4" viewBox="0 0 4 4"><path d="M4 0V4H0Z" fill="#e8e8e8"/></svg>
<svg class="s" style="left:11px;top:598px;" width="17" height="17" viewBox="0 0 17 17"><circle cx="6.5" cy="6.5" r="5.5" fill="none" stroke="#b4b4b4" stroke-width="2"/><circle cx="6.5" cy="6.5" r="4" fill="#a0a0a0"/><path d="M10.5 10.5L16 16" stroke="#b4b4b4" stroke-width="2.8"/></svg>
<svg class="s" style="left:4px;top:620px;" width="12" height="12" viewBox="0 0 12 12"><rect x="4" y="4" width="7.5" height="7.5" fill="#8a8a8a" stroke="#cfcfcf" stroke-width="1"/><rect x="0.5" y="0.5" width="7" height="7" fill="#1e1e1e" stroke="#cfcfcf" stroke-width="1"/></svg>
<svg class="s" style="left:22px;top:620px;" width="11" height="12" viewBox="0 0 11 12"><path d="M2 3H6C8 3 9 4 9 6V10" fill="none" stroke="#cfcfcf" stroke-width="1.2"/><path d="M0 3L3 0.5V5.5ZM9 12L6.5 9H11.5Z" fill="#cfcfcf"/></svg>
<div class="a" style="left:14px;top:647px;width:20px;height:20px;background:#ffffff;border:1px solid #2e2e2e;box-shadow:0 0 0 1px #777"></div>
<div class="a" style="left:4px;top:637px;width:20px;height:20px;background:#ffffff;border:1px solid #2e2e2e;box-shadow:0 0 0 1px #777"></div>
<svg class="s" style="left:10px;top:675px;" width="17" height="14" viewBox="0 0 17 14"><rect x="0.7" y="0.7" width="15.6" height="12.6" fill="#2c2c2c" stroke="#c8c8c8" stroke-width="1.3"/><circle cx="8.5" cy="7" r="4" fill="none" stroke="#dcdcdc" stroke-width="1.3" stroke-dasharray="1 1.2"/></svg>
<svg class="s" style="left:10px;top:701px;" width="18" height="15" viewBox="0 0 18 15"><rect x="0.7" y="4.7" width="11" height="9" fill="#3a3a3a" stroke="#c0c0c0" stroke-width="1.3"/><rect x="5.7" y="0.7" width="11" height="9" fill="#7a7a7a" stroke="#c8c8c8" stroke-width="1.3"/></svg>
<svg class="s" style="left:28px;top:713px;" width="4" height="4" viewBox="0 0 4 4"><path d="M4 0V4H0Z" fill="#e8e8e8"/></svg>
<div class="a" style="left:1103px;top:63px;width:263px;height:12px;background:#3b3b3b;"></div>
<svg class="s" style="left:1129px;top:66px;" width="8" height="6" viewBox="0 0 8 6"><path d="M4 0L0.5 3L4 6ZM8 0L4.5 3L8 6Z" fill="#d0d0d0"/></svg>
<svg class="s" style="left:1354px;top:66px;" width="8" height="6" viewBox="0 0 8 6"><path d="M0 0L3.5 3L0 6ZM4 0L7.5 3L4 6Z" fill="#d0d0d0"/></svg>
<div class="a" style="left:1103px;top:75px;width:37px;height:645px;background:#535353;"></div>
<div class="a" style="left:1103px;top:75px;width:37px;height:40px;background:#535353;border-top:1px solid #606060;border-left:1px solid #5c5c5c"></div>
<div class="a" style="left:1103px;top:115px;width:37px;height:1px;background:#353535;"></div>
<svg class="s" style="left:1112px;top:80px;" width="20" height="3" viewBox="0 0 20 3"><rect x="0" y="0" width="1" height="3" fill="#2c2c2c"/><rect x="2" y="0" width="1" height="3" fill="#2c2c2c"/><rect x="4" y="0" width="1" height="3" fill="#2c2c2c"/><rect x="6" y="0" width="1" height="3" fill="#2c2c2c"/><rect x="8" y="0" width="1" height="3" fill="#2c2c2c"/><rect x="10" y="0" width="1" height="3" fill="#2c2c2c"/><rect x="12" y="0" width="1" height="3" fill="#2c2c2c"/><rect x="14" y="0" width="1" height="3" fill="#2c2c2c"/><rect x="16" y="0" width="1" height="3" fill="#2c2c2c"/><rect x="18" y="0" width="1" height="3" fill="#2c2c2c"/></svg>
<div class="a" style="left:1103px;top:116px;width:37px;height:40px;background:#535353;border-top:1px solid #606060;border-left:1px solid #5c5c5c"></div>
<div class="a" style="left:1103px;top:156px;width:37px;height:1px;background:#353535;"></div>
<svg class="s" style="left:1112px;top:121px;" width="20" height="3" viewBox="0 0 20 3"><rect x="0" y="0" width="1" height="3" fill="#2c2c2c"/><rect x="2" y="0" width="1" height="3" fill="#2c2c2c"/><rect x="4" y="0" width="1" height="3" fill="#2c2c2c"/><rect x="6" y="0" width="1" height="3" fill="#2c2c2c"/><rect x="8" y="0" width="1" height="3" fill="#2c2c2c"/><rect x="10" y="0" width="1" height="3" fill="#2c2c2c"/><rect x="12" y="0" width="1" height="3" fill="#2c2c2c"/><rect x="14" y="0" width="1" height="3" fill="#2c2c2c"/><rect x="16" y="0" width="1" height="3" fill="#2c2c2c"/><rect x="18" y="0" width="1" height="3" fill="#2c2c2c"/></svg>
<div class="a" style="left:1103px;top:157px;width:37px;height:68px;background:#535353;border-top:1px solid #606060;border-left:1px solid #5c5c5c"></div>
<div class="a" style="left:1103px;top:225px;width:37px;height:1px;background:#353535;"></div>
<svg class="s" style="left:1112px;top:162px;" width="20" height="3" viewBox="0 0 20 3"><rect x="0" y="0" width="1" height="3" fill="#2c2c2c"/><rect x="2" y="0" width="1" height="3" fill="#2c2c2c"/><rect x="4" y="0" width="1" height="3" fill="#2c2c2c"/><rect x="6" y="0" width="1" height="3" fill="#2c2c2c"/><rect x="8" y="0" width="1" height="3" fill="#2c2c2c"/><rect x="10" y="0" width="1" height="3" fill="#2c2c2c"/><rect x="12" y="0" width="1" height="3" fill="#2c2c2c"/><rect x="14" y="0" width="1" height="3" fill="#2c2c2c"/><rect x="16" y="0" width="1" height="3" fill="#2c2c2c"/><rect x="18" y="0" width="1" height="3" fill="#2c2c2c"/></svg>
<svg class="s" style="left:1116px;top:89px;" width="16" height="19" viewBox="0 0 16 19"><rect x="0.5" y="0.5" width="4.5" height="4.5" fill="#3e3e3e" stroke="#b0b0b0" stroke-width="1"/><rect x="0.5" y="6.5" width="4.5" height="4.5" fill="#3e3e3e" stroke="#b0b0b0" stroke-width="1"/><rect x="0" y="12.5" width="5.5" height="5.5" fill="#b0b0b0"/><path d="M8 1.5H11.5C15 2 15 8 13 11C12 13 10.5 15 9 17" fill="none" stroke="#b0b0b0" stroke-width="2"/><path d="M7 0V4L10 1.5Z" fill="#b0b0b0"/></svg>
<svg class="s" style="left:1115px;top:130px;" width="17" height="18" viewBox="0 0 17 18"><path d="M4.5 0.5L9 2.5V7L4.5 9L0.5 7V2.5Z" fill="none" stroke="#b0b0b0" stroke-width="1.1"/><path d="M0.5 2.5L4.5 4.5L9 2.5M4.5 4.5V9" fill="none" stroke="#b0b0b0" stroke-width="1"/><rect x="11" y="1" width="5" height="3" fill="#b0b0b0"/><rect x="11" y="6" width="5" height="3" fill="#b0b0b0"/><rect x="1" y="12" width="15" height="4" fill="#b0b0b0"/><path d="M11 13H15L13 15Z" fill="#333"/></svg>
<div class="t" style="left:1115px;top:171px;font-size:19px;line-height:20px;color:#b4b4b4;-webkit-text-stroke:0.5px #b4b4b4">A</div>
<div class="a" style="left:1129px;top:171px;width:1px;height:18px;background:#b0b0b0;"></div>
<svg class="s" style="left:1117px;top:201px;" width="11" height="18" viewBox="0 0 11 18"><path d="M5 1H10.5V17H8.5V3H7V17H5V9C1 9 0 7 0 5C0 2 2 1 5 1Z" fill="#b0b0b0"/></svg>
<div class="a" style="left:1140px;top:75px;width:3px;height:645px;background:#2b2b2b;"></div>
<div class="a" style="left:1143px;top:75px;width:223px;height:645px;background:#535353;"></div>
<div class="a" style="left:1143px;top:75px;width:223px;height:17px;background:#3c3c3c;"></div>
<div class="a" style="left:1143px;top:75px;width:40px;height:17px;background:#535353;border-top:1px solid #5e5e5e"></div>
<div class="a" style="left:1183px;top:75px;width:58px;height:17px;background:#424242;border-left:1px solid #2e2e2e;border-right:1px solid #2e2e2e"></div>
<div class="t" style="left:1150px;top:77.53px;font-size:10px;line-height:12px;color:#f0f0f0;font-weight:bold;transform:scaleX(0.958);transform-origin:0 0;">Color</div>
<div class="t" style="left:1190px;top:77.53px;font-size:10px;line-height:12px;color:#a4a4a4;font-weight:bold;transform:scaleX(0.943);transform-origin:0 0;">Swatches</div>
<svg class="s" style="left:1348px;top:79px;" width="14" height="9" viewBox="0 0 14 9"><path d="M0 3H5L2.5 6Z" fill="#e0e0e0"/><path d="M5 1H14M5 3.7H14M5 6.4H14M5 9H14" stroke="#e0e0e0" stroke-width="1.1"/></svg>
<div class="a" style="left:1158px;top:111px;width:21px;height:20px;background:#ffffff;border:1px solid #2e2e2e;box-shadow:0 0 0 1px #6a6a6a"></div>
<div class="a" style="left:1148px;top:101px;width:21px;height:20px;background:#ffffff;border:1px solid #2e2e2e;box-shadow:0 0 0 1px #6a6a6a"></div>
<div class="t" style="left:1186px;top:102.33px;font-size:10px;line-height:12px;color:#ececec;font-weight:bold;transform:scaleX(0.900);transform-origin:0 0;">R</div>
<div class="a" style="left:1201px;top:102px;width:85px;height:5px;background:linear-gradient(90deg,#00ffff,#ffffff);box-shadow:0 0 0 1px #8c8c8c"></div>
<svg class="s" style="left:1280.5px;top:107.5px;" width="10" height="9.5" viewBox="0 0 10 9.5"><defs><linearGradient id="th" x1="0" y1="0" x2="0" y2="1"><stop offset="0" stop-color="#dcdcdc"/><stop offset="1" stop-color="#7c7c7c"/></linearGradient></defs><path d="M5 0.6L9.4 4.6V8.9H0.6V4.6Z" fill="url(#th)" stroke="#2e2e2e" stroke-width="1"/></svg>
<div class="a" style="left:1292px;top:100px;width:46px;height:18px;background:#3c3c3c;border:1px solid #323232;box-shadow:0 1px 0 #5c5c5c"></div>
<div class="t" style="left:1297px;top:103.53px;font-size:10px;line-height:12px;color:#f2f2f2;transform:scaleX(0.899);transform-origin:0 0;">255</div>
<div class="t" style="left:1186px;top:126.34px;font-size:10px;line-height:12px;color:#ececec;font-weight:bold;transform:scaleX(0.836);transform-origin:0 0;">G</div>
<div class="a" style="left:1201px;top:126px;width:85px;height:5px;background:linear-gradient(90deg,#ff00ff,#ffffff);box-shadow:0 0 0 1px #8c8c8c"></div>
<svg class="s" style="left:1280.5px;top:131.5px;" width="10" height="9.5" viewBox="0 0 10 9.5"><defs><linearGradient id="th" x1="0" y1="0" x2="0" y2="1"><stop offset="0" stop-color="#dcdcdc"/><stop offset="1" stop-color="#7c7c7c"/></linearGradient></defs><path d="M5 0.6L9.4 4.6V8.9H0.6V4.6Z" fill="url(#th)" stroke="#2e2e2e" stroke-width="1"/></svg>
<div class="a" style="left:1292px;top:124px;width:46px;height:18px;background:#3c3c3c;border:1px solid #323232;box-shadow:0 1px 0 #5c5c5c"></div>
<div class="t" style="left:1297px;top:127.53px;font-size:10px;line-height:12px;color:#f2f2f2;transform:scaleX(0.899);transform-origin:0 0;">255</div>
<div class="t" style="left:1186px;top:150.34px;font-size:10px;line-height:12px;color:#ececec;font-weight:bold;transform:scaleX(0.900);transform-origin:0 0;">B</div>
<div class="a" style="left:1201px;top:150px;width:85px;height:5px;background:linear-gradient(90deg,#ffff00,#ffffff);box-shadow:0 0 0 1px #8c8c8c"></div>
<svg class="s" style="left:1280.5px;top:155.5px;" width="10" height="9.5" viewBox="0 0 10 9.5"><defs><linearGradient id="th" x1="0" y1="0" x2="0" y2="1"><stop offset="0" stop-color="#dcdcdc"/><stop offset="1" stop-color="#7c7c7c"/></linearGradient></defs><path d="M5 0.6L9.4 4.6V8.9H0.6V4.6Z" fill="url(#th)" stroke="#2e2e2e" stroke-width="1"/></svg>
<div class="a" style="left:1292px;top:148px;width:46px;height:18px;background:#3c3c3c;border:1px solid #323232;box-shadow:0 1px 0 #5c5c5c"></div>
<div class="t" style="left:1297px;top:151.53px;font-size:10px;line-height:12px;color:#f2f2f2;transform:scaleX(0.899);transform-origin:0 0;">255</div>
<div class="a" style="left:1148px;top:175px;width:199px;height:15px;background:linear-gradient(#ffffff00,#ffffff00);"></div>
<div class="a" style="left:1148px;top:175px;width:191px;height:15px;background:linear-gradient(90deg,#ff0000,#ffff00 17%,#00c000 33%,#00c0ff 50%,#0000c0 67%,#ff00a0 83%,#ff0000);"></div>
<div class="a" style="left:1148px;top:175px;width:191px;height:15px;background:linear-gradient(rgba(255,255,255,0.55),rgba(255,255,255,0) 45%,rgba(0,0,0,0) 55%,rgba(0,0,0,0.75));"></div>
<div class="a" style="left:1339px;top:175px;width:8px;height:8px;background:#ffffff;"></div>
<div class="a" style="left:1339px;top:183px;width:8px;height:7px;background:#000000;"></div>
<div class="a" style="left:1143px;top:193px;width:223px;height:2px;background:#2e2e2e;"></div>
<div class="a" style="left:1143px;top:195px;width:223px;height:17px;background:#3c3c3c;"></div>
<div class="a" style="left:1143px;top:195px;width:73px;height:17px;background:#535353;border-top:1px solid #5e5e5e"></div>
<div class="a" style="left:1216px;top:195px;width:42px;height:17px;background:#424242;border-left:1px solid #2e2e2e;border-right:1px solid #2e2e2e"></div>
<div class="t" style="left:1150px;top:197.13px;font-size:10px;line-height:12px;color:#f0f0f0;font-weight:bold;transform:scaleX(0.968);transform-origin:0 0;">Adjustments</div>
<div class="t" style="left:1223px;top:197.13px;font-size:10px;line-height:12px;color:#a4a4a4;font-weight:bold;transform:scaleX(0.916);transform-origin:0 0;">Styles</div>
<svg class="s" style="left:1348px;top:199px;" width="14" height="9" viewBox="0 0 14 9"><path d="M0 3H5L2.5 6Z" fill="#e0e0e0"/><path d="M5 1H14M5 3.7H14M5 6.4H14M5 9H14" stroke="#e0e0e0" stroke-width="1.1"/></svg>
<div class="t" style="left:1152px;top:217.03px;font-size:10px;line-height:12px;color:#f4f4f4;font-weight:bold;transform:scaleX(1.044);transform-origin:0 0;">Add an adjustment</div>
<svg class="s" style="left:1189px;top:237px;" width="16" height="16" viewBox="0 0 16 16"><circle cx="8" cy="8" r="4" fill="none" stroke="#b4b4b4" stroke-width="1.5"/><path d="M8 4A4 4 0 0 1 8 12Z" fill="#b4b4b4"/><path d="M8 0V2.5M8 13.5V16M0 8H2.5M13.5 8H16M2.3 2.3L4 4M12 12L13.7 13.7M13.7 2.3L12 4M4 12L2.3 13.7" stroke="#b4b4b4" stroke-width="1.3"/></svg>
<svg class="s" style="left:1213px;top:237px;" width="18" height="15" viewBox="0 0 18 15"><path d="M0 15V9L2 8L3 5L4 8L5 3L6 8L8 2L9 7L10 4L11 8L12 3L13 7L14 5L15 8L16 6L17 9V15Z" fill="#b4b4b4"/></svg>
<svg class="s" style="left:1238px;top:237px;" width="16" height="16" viewBox="0 0 16 16"><rect x="0.5" y="0.5" width="15" height="15" fill="#4a4a4a" stroke="#b4b4b4" stroke-width="1"/><path d="M0 5.5H16M0 10.5H16M5.5 0V16M10.5 0V16" stroke="#8a8a8a" stroke-width="0.8"/><path d="M1 15C6 15 9 2 15 1" fill="none" stroke="#e0e0e0" stroke-width="1.3"/></svg>
<svg class="s" style="left:1262px;top:238px;" width="16" height="14" viewBox="0 0 16 14"><rect x="0.5" y="0.5" width="15" height="13" fill="#6a6a6a" stroke="#b4b4b4" stroke-width="1"/><path d="M0 14L16 0" stroke="#9a9a9a" stroke-width="1"/><path d="M2 4H6M4 2V6M9 10H14" stroke="#e0e0e0" stroke-width="1.2"/></svg>
<svg class="s" style="left:1286px;top:237px;" width="17" height="15" viewBox="0 0 17 15"><defs><linearGradient id="tri" x1="0" y1="0" x2="0" y2="1"><stop offset="0" stop-color="#9a9a9a"/><stop offset="1" stop-color="#6a6a6a"/></linearGradient></defs><path d="M0.5 0.5H16.5L8.5 14.5Z" fill="url(#tri)" stroke="#8a8a8a"/></svg>
<svg class="s" style="left:1178px;top:264px;" width="17" height="14" viewBox="0 0 17 14"><rect x="0.5" y="0.5" width="16" height="13" fill="#333" stroke="#b4b4b4" stroke-width="1"/><rect x="1" y="1" width="15" height="6" fill="#9a9a9a"/><path d="M4 1V7M8 1V7M12 1V7" stroke="#555" stroke-width="1"/><rect x="1" y="7" width="15" height="6" fill="url(#gr1)"/></svg>
<svg class="s" style="left:1201px;top:263px;" width="17" height="16" viewBox="0 0 17 16"><path d="M8.5 1V15M3 15H14M2 4H15" stroke="#b4b4b4" stroke-width="1.4"/><path d="M0 10L3 4L6 10ZM11 10L14 4L17 10Z" fill="#b4b4b4"/><path d="M6 2L8.5 0L11 2" fill="#b4b4b4"/></svg>
<svg class="s" style="left:1226px;top:264px;" width="17" height="14" viewBox="0 0 17 14"><rect x="0.5" y="0.5" width="16" height="13" fill="#7a7a7a" stroke="#b4b4b4" stroke-width="1"/><rect x="1" y="1" width="7.5" height="12" fill="#3e3e3e"/></svg>
<svg class="s" style="left:1249px;top:263px;" width="18" height="18" viewBox="0 0 18 18"><rect x="0.5" y="2.5" width="11" height="9" fill="#555" stroke="#b4b4b4" stroke-width="1.1"/><circle cx="6" cy="7" r="3" fill="none" stroke="#b4b4b4" stroke-width="1.2"/><circle cx="12" cy="12" r="5.3" fill="#5a5a5a" stroke="#b4b4b4" stroke-width="1.4"/></svg>
<svg class="s" style="left:1273px;top:263px;" width="17" height="16" viewBox="0 0 17 16"><circle cx="8.5" cy="5" r="4.5" fill="#b4b4b4"/><circle cx="5" cy="11" r="4.5" fill="#9a9a9a"/><circle cx="12" cy="11" r="4.5" fill="#a8a8a8"/><path d="M6 6L8.5 9L11 6" fill="#555"/></svg>
<svg class="s" style="left:1298px;top:264px;" width="17" height="14" viewBox="0 0 17 14"><rect x="0.5" y="0.5" width="16" height="13" fill="#333" stroke="#b4b4b4" stroke-width="1"/><path d="M1 5H16M1 9.5H16M6 1V13M11 1V13" stroke="#b4b4b4" stroke-width="1.3"/></svg>
<div class="a" style="left:1190px;top:292px;width:16px;height:13px;background:#6a6a6a;border:1px solid #b0b0b0"></div>
<div class="a" style="left:1214px;top:292px;width:16px;height:13px;background:#6a6a6a;border:1px solid #b0b0b0"></div>
<div class="a" style="left:1238px;top:292px;width:16px;height:13px;background:#6a6a6a;border:1px solid #b0b0b0"></div>
<div class="a" style="left:1262px;top:292px;width:16px;height:13px;background:#6a6a6a;border:1px solid #b0b0b0"></div>
<div class="a" style="left:1286px;top:292px;width:16px;height:13px;background:#6a6a6a;border:1px solid #b0b0b0"></div>
<svg class="s" style="left:1191px;top:293px;" width="14" height="11" viewBox="0 0 14 11"><ellipse cx="7" cy="5.5" rx="4.5" ry="4" fill="#bdbdbd"/><path d="M0 11L14 0" stroke="#404040" stroke-width="1.5"/></svg>
<svg class="s" style="left:1215px;top:293px;" width="14" height="11" viewBox="0 0 14 11"><path d="M0 4L4 0H8L0 8ZM3 11L14 0V4L7 11Z" fill="#c0c0c0"/></svg>
<svg class="s" style="left:1239px;top:293px;" width="14" height="11" viewBox="0 0 14 11"><path d="M0 11V8H4V5H8V2H14" fill="none" stroke="#2e2e2e" stroke-width="2.5"/></svg>
<svg class="s" style="left:1263px;top:293px;" width="14" height="11" viewBox="0 0 14 11"><path d="M0 0L7 5.5L0 11ZM14 0L7 5.5L14 11Z" fill="#9a9a9a"/><path d="M0 0L14 11M14 0L0 11" stroke="#d8d8d8" stroke-width="0.9"/></svg>
<svg class="s" style="left:1287px;top:293px;" width="14" height="11" viewBox="0 0 14 11"><defs><linearGradient id="gr2"><stop offset="0" stop-color="#202020"/><stop offset="1" stop-color="#e0e0e0"/></linearGradient></defs><rect x="0" y="0" width="14" height="11" fill="url(#gr2)"/></svg>
<div class="a" style="left:1143px;top:315px;width:223px;height:3px;background:#2e2e2e;"></div>
<div class="a" style="left:1143px;top:318px;width:223px;height:17px;background:#3c3c3c;"></div>
<div class="a" style="left:1143px;top:318px;width:43px;height:17px;background:#535353;border-top:1px solid #5e5e5e"></div>
<div class="a" style="left:1186px;top:318px;width:56px;height:17px;background:#424242;border-left:1px solid #2e2e2e"></div>
<div class="a" style="left:1242px;top:318px;width:41px;height:17px;background:#424242;border-left:1px solid #2e2e2e;border-right:1px solid #2e2e2e"></div>
<div class="t" style="left:1150px;top:320.33px;font-size:10px;line-height:12px;color:#f0f0f0;font-weight:bold;transform:scaleX(0.868);transform-origin:0 0;">Layers</div>
<div class="t" style="left:1193.4px;top:320.33px;font-size:10px;line-height:12px;color:#a4a4a4;font-weight:bold;transform:scaleX(0.911);transform-origin:0 0;">Channels</div>
<div class="t" style="left:1250.7px;top:320.33px;font-size:10px;line-height:12px;color:#a4a4a4;font-weight:bold;transform:scaleX(0.903);transform-origin:0 0;">Paths</div>
<svg class="s" style="left:1348px;top:322px;" width="14" height="9" viewBox="0 0 14 9"><path d="M0 3H5L2.5 6Z" fill="#e0e0e0"/><path d="M5 1H14M5 3.7H14M5 6.4H14M5 9H14" stroke="#e0e0e0" stroke-width="1.1"/></svg>
<div class="a" style="left:1148px;top:340px;width:69px;height:19px;background:linear-gradient(#606060,#545454);border:1px solid #3a3a3a;border-radius:3px"></div>
<svg class="s" style="left:1154px;top:344px;" width="10" height="10" viewBox="0 0 10 10"><circle cx="6" cy="4" r="3.2" fill="none" stroke="#d0d0d0" stroke-width="1.3"/><path d="M3.5 6.5L0.5 9.5" stroke="#d0d0d0" stroke-width="1.6"/></svg>
<div class="t" style="left:1169px;top:341.66px;font-size:10.5px;line-height:13px;color:#f0f0f0;transform:scaleX(0.918);transform-origin:0 0;">Kind</div>
<svg class="s" style="left:1208px;top:344px;" width="6" height="11" viewBox="0 0 6 11"><path d="M0 4.5L3 0L6 4.5ZM0 6.5L3 11L6 6.5Z" fill="#e0e0e0"/></svg>
<svg class="s" style="left:1229px;top:342px;" width="14" height="13" viewBox="0 0 14 13"><rect x="0.5" y="0.5" width="13" height="12" fill="none" stroke="#b8b8b8"/><path d="M2 11L5 6L8 9L10 7L12 11Z" fill="#b8b8b8"/><circle cx="10" cy="3.5" r="1.2" fill="#b8b8b8"/></svg>
<svg class="s" style="left:1254px;top:343px;" width="11" height="11" viewBox="0 0 11 11"><circle cx="5.5" cy="5.5" r="5" fill="#bdbdbd"/><path d="M9 2L2 9A5 5 0 0 0 9 2Z" fill="#6a6a6a"/></svg>
<svg class="s" style="left:1277px;top:342px;" width="12" height="13" viewBox="0 0 12 13"><path d="M0.8 3.5V0.8H11.2V3.5M6 0.8V12.2M3.5 12.2H8.5" fill="none" stroke="#b8b8b8" stroke-width="1.6"/></svg>
<svg class="s" style="left:1301px;top:342px;" width="13" height="13" viewBox="0 0 13 13"><rect x="2" y="2" width="9" height="9" fill="none" stroke="#b8b8b8" stroke-width="1.2"/><rect x="0" y="0" width="3.5" height="3.5" fill="#b8b8b8"/><rect x="9.5" y="0" width="3.5" height="3.5" fill="#b8b8b8"/><rect x="0" y="9.5" width="3.5" height="3.5" fill="#b8b8b8"/><rect x="9.5" y="9.5" width="3.5" height="3.5" fill="#b8b8b8"/></svg>
<svg class="s" style="left:1325px;top:342px;" width="13" height="14" viewBox="0 0 13 14"><path d="M5 0.5H10L12.5 3V13.5H5Z" fill="none" stroke="#b8b8b8" stroke-width="1"/><rect x="0" y="6" width="7" height="7" fill="#b8b8b8"/></svg>
<div class="a" style="left:1351px;top:340px;width:10px;height:17px;background:linear-gradient(#a0a0a0 0,#a0a0a0 45%,#2e2e2e 45%);border:1px solid #2e2e2e"></div>
<div class="a" style="left:1143px;top:362px;width:223px;height:1px;background:#3a3a3a;box-shadow:0 1px 0 #5e5e5e"></div>
<div class="a" style="left:1148px;top:368px;width:110px;height:19px;background:linear-gradient(#5a5a5a,#535353);border:1px solid #424242;border-radius:3px"></div>
<div class="t" style="left:1155.7px;top:369.96px;font-size:10.5px;line-height:13px;color:#acacac;transform:scaleX(0.904);transform-origin:0 0;">Normal</div>
<svg class="s" style="left:1249px;top:372px;" width="6" height="11" viewBox="0 0 6 11"><path d="M0 4.5L3 0L6 4.5ZM0 6.5L3 11L6 6.5Z" fill="#9a9a9a"/></svg>
<div class="t" style="left:1265.4px;top:369.86px;font-size:10.5px;line-height:13px;color:#acacac;transform:scaleX(0.924);transform-origin:0 0;">Opacity:</div>
<div class="a" style="left:1307px;top:367px;width:53px;height:20px;background:#4a4a4a;border:1px solid #454545;border-radius:3px"></div>
<div class="a" style="left:1342px;top:368px;width:17px;height:18px;background:#5a5a5a;"></div>
<div class="t" style="left:1312.8px;top:369.86px;font-size:10.5px;line-height:13px;color:#707070;transform:scaleX(0.879);transform-origin:0 0;">100%</div>
<svg class="s" style="left:1348px;top:376px;" width="6" height="3" viewBox="0 0 6 3"><path d="M0 0H6L3 3Z" fill="#a0a0a0"/></svg>
<div class="a" style="left:1143px;top:391px;width:223px;height:1px;background:#3a3a3a;box-shadow:0 1px 0 #5e5e5e"></div>
<div class="t" style="left:1149.2px;top:398.46px;font-size:10.5px;line-height:13px;color:#acacac;transform:scaleX(0.924);transform-origin:0 0;">Lock:</div>
<svg class="s" style="left:1182px;top:400px;" width="11" height="11" viewBox="0 0 11 11"><rect x="0" y="0" width="11" height="11" fill="#6a6a6a"/><rect x="0" y="0" width="3.7" height="3.7" fill="#8a8a8a"/><rect x="7.3" y="0" width="3.7" height="3.7" fill="#8a8a8a"/><rect x="3.7" y="3.7" width="3.7" height="3.7" fill="#8a8a8a"/><rect x="0" y="7.3" width="3.7" height="3.7" fill="#8a8a8a"/><rect x="7.3" y="7.3" width="3.7" height="3.7" fill="#8a8a8a"/></svg>
<svg class="s" style="left:1202px;top:398px;" width="17" height="14" viewBox="0 0 17 14"><path d="M16 0L7 9" stroke="#8a8a8a" stroke-width="1.8"/><path d="M0 13C2 12 3 9 6 9L8 11C7 13 4 13 0 13Z" fill="#8a8a8a"/></svg>
<svg class="s" style="left:1225px;top:398px;" width="14" height="14" viewBox="0 0 14 14"><path d="M7 0.5V13.5M0.5 7H13.5" stroke="#8a8a8a" stroke-width="1.1"/><path d="M7 0L9.5 3H4.5ZM7 14L9.5 11H4.5ZM0 7L3 4.5V9.5ZM14 7L11 4.5V9.5Z" fill="#8a8a8a"/><rect x="5" y="5" width="4" height="4" fill="none" stroke="#8a8a8a"/></svg>
<svg class="s" style="left:1249px;top:398px;" width="11" height="14" viewBox="0 0 11 14"><path d="M2.5 6V4A3 3 0 0 1 8.5 4V6" fill="none" stroke="#8a8a8a" stroke-width="1.6"/><rect x="0.5" y="6" width="10" height="8" fill="#8a8a8a"/></svg>
<div class="t" style="left:1287.5px;top:397.36px;font-size:10.5px;line-height:13px;color:#acacac;transform:scaleX(0.827);transform-origin:0 0;">Fill:</div>
<div class="a" style="left:1307px;top:395px;width:53px;height:20px;background:#4a4a4a;border:1px solid #454545;border-radius:3px"></div>
<div class="a" style="left:1342px;top:396px;width:17px;height:18px;background:#5a5a5a;"></div>
<div class="t" style="left:1312.8px;top:397.86px;font-size:10.5px;line-height:13px;color:#707070;transform:scaleX(0.879);transform-origin:0 0;">100%</div>
<svg class="s" style="left:1348px;top:404px;" width="6" height="3" viewBox="0 0 6 3"><path d="M0 0H6L3 3Z" fill="#a0a0a0"/></svg>
<div class="a" style="left:1143px;top:420px;width:223px;height:1px;background:#3a3a3a;"></div>
<div class="a" style="left:1143px;top:421px;width:207px;height:287px;background:#4a4a4a;"></div>
<div class="a" style="left:1350px;top:421px;width:16px;height:287px;background:#3e3e3e;"></div>
<div class="a" style="left:1143px;top:421px;width:207px;height:38px;background:#535353;"></div>
<div class="a" style="left:1173px;top:421px;width:1px;height:38px;background:#3a3a3a;"></div>
<div class="a" style="left:1152px;top:433px;width:13px;height:13px;background:#4e4e4e;border:1px solid #3c3c3c"></div>
<svg class="s" style="left:1177px;top:424px;" width="21" height="32" viewBox="0 0 21 32"><rect x="0" y="0" width="21" height="32" fill="#111"/><svg x="1" y="1" width="19" height="30"><rect x="0" y="0" width="19" height="30" fill="#ffffff"/><rect x="0" y="4" width="4" height="4" fill="#cbcbcb"/><rect x="0" y="12" width="4" height="4" fill="#cbcbcb"/><rect x="0" y="20" width="4" height="4" fill="#cbcbcb"/><rect x="0" y="28" width="4" height="4" fill="#cbcbcb"/><rect x="4" y="0" width="4" height="4" fill="#cbcbcb"/><rect x="4" y="8" width="4" height="4" fill="#cbcbcb"/><rect x="4" y="16" width="4" height="4" fill="#cbcbcb"/><rect x="4" y="24" width="4" height="4" fill="#cbcbcb"/><rect x="8" y="4" width="4" height="4" fill="#cbcbcb"/><rect x="8" y="12" width="4" height="4" fill="#cbcbcb"/><rect x="8" y="20" width="4" height="4" fill="#cbcbcb"/><rect x="8" y="28" width="4" height="4" fill="#cbcbcb"/><rect x="12" y="0" width="4" height="4" fill="#cbcbcb"/><rect x="12" y="8" width="4" height="4" fill="#cbcbcb"/><rect x="12" y="16" width="4" height="4" fill="#cbcbcb"/><rect x="12" y="24" width="4" height="4" fill="#cbcbcb"/><rect x="16" y="4" width="4" height="4" fill="#cbcbcb"/><rect x="16" y="12" width="4" height="4" fill="#cbcbcb"/><rect x="16" y="20" width="4" height="4" fill="#cbcbcb"/><rect x="16" y="28" width="4" height="4" fill="#cbcbcb"/></svg></svg>
<div class="t" style="left:1208px;top:434.86px;font-size:10.5px;line-height:13px;color:#f0f0f0;transform:scaleX(0.920);transform-origin:0 0;">Shape 1</div>
<div class="a" style="left:1143px;top:459px;width:207px;height:1px;background:#3a3a3a;"></div>
<div class="a" style="left:1143px;top:460px;width:207px;height:22px;background:#535353;"></div>
<div class="a" style="left:1173px;top:460px;width:1px;height:22px;background:#3a3a3a;"></div>
<div class="a" style="left:1143px;top:482px;width:207px;height:1px;background:#3a3a3a;"></div>
<svg class="s" style="left:1152px;top:466px;" width="13" height="10" viewBox="0 0 13 10"><path d="M0.8 5C3 1.2 10 1.2 12.2 5C10 8.8 3 8.8 0.8 5Z" fill="#9c9c9c" stroke="#c4c4c4" stroke-width="1.2"/><circle cx="6.5" cy="5" r="2.9" fill="#3c3c3c"/><circle cx="7.4" cy="4" r="0.9" fill="#d8d8d8"/></svg>
<svg class="s" style="left:1179px;top:466px;" width="6" height="10" viewBox="0 0 6 10"><path d="M0 0L6 5L0 10Z" fill="#f0f0f0"/></svg>
<svg class="s" style="left:1191px;top:465px;" width="15" height="11" viewBox="0 0 15 11"><defs><linearGradient id="fd" x1="0" y1="0" x2="0" y2="1"><stop offset="0" stop-color="#e0e0e0"/><stop offset="1" stop-color="#a8a8a8"/></linearGradient></defs><path d="M0 1H6L7 2.5H15V11H0Z" fill="url(#fd)"/></svg>
<div class="t" style="left:1218px;top:465.66px;font-size:10.5px;line-height:13px;color:#f0f0f0;transform:scaleX(0.899);transform-origin:0 0;">Logo</div>
<div class="a" style="left:1143px;top:483px;width:207px;height:22px;background:#535353;"></div>
<div class="a" style="left:1173px;top:483px;width:1px;height:22px;background:#3a3a3a;"></div>
<div class="a" style="left:1143px;top:505px;width:207px;height:1px;background:#3a3a3a;"></div>
<svg class="s" style="left:1152px;top:489px;" width="13" height="10" viewBox="0 0 13 10"><path d="M0.8 5C3 1.2 10 1.2 12.2 5C10 8.8 3 8.8 0.8 5Z" fill="#9c9c9c" stroke="#c4c4c4" stroke-width="1.2"/><circle cx="6.5" cy="5" r="2.9" fill="#3c3c3c"/><circle cx="7.4" cy="4" r="0.9" fill="#d8d8d8"/></svg>
<svg class="s" style="left:1179px;top:489px;" width="6" height="10" viewBox="0 0 6 10"><path d="M0 0L6 5L0 10Z" fill="#f0f0f0"/></svg>
<svg class="s" style="left:1191px;top:488px;" width="15" height="11" viewBox="0 0 15 11"><defs><linearGradient id="fd" x1="0" y1="0" x2="0" y2="1"><stop offset="0" stop-color="#e0e0e0"/><stop offset="1" stop-color="#a8a8a8"/></linearGradient></defs><path d="M0 1H6L7 2.5H15V11H0Z" fill="url(#fd)"/></svg>
<div class="t" style="left:1218px;top:488.66px;font-size:10.5px;line-height:13px;color:#f0f0f0;transform:scaleX(0.975);transform-origin:0 0;">Group 1</div>
<div class="a" style="left:1143px;top:506px;width:207px;height:22px;background:#535353;"></div>
<div class="a" style="left:1173px;top:506px;width:1px;height:22px;background:#3a3a3a;"></div>
<div class="a" style="left:1143px;top:528px;width:207px;height:1px;background:#3a3a3a;"></div>
<svg class="s" style="left:1152px;top:512px;" width="13" height="10" viewBox="0 0 13 10"><path d="M0.8 5C3 1.2 10 1.2 12.2 5C10 8.8 3 8.8 0.8 5Z" fill="#9c9c9c" stroke="#c4c4c4" stroke-width="1.2"/><circle cx="6.5" cy="5" r="2.9" fill="#3c3c3c"/><circle cx="7.4" cy="4" r="0.9" fill="#d8d8d8"/></svg>
<svg class="s" style="left:1179px;top:512px;" width="6" height="10" viewBox="0 0 6 10"><path d="M0 0L6 5L0 10Z" fill="#f0f0f0"/></svg>
<svg class="s" style="left:1191px;top:511px;" width="15" height="11" viewBox="0 0 15 11"><defs><linearGradient id="fd" x1="0" y1="0" x2="0" y2="1"><stop offset="0" stop-color="#e0e0e0"/><stop offset="1" stop-color="#a8a8a8"/></linearGradient></defs><path d="M0 1H6L7 2.5H15V11H0Z" fill="url(#fd)"/></svg>
<div class="t" style="left:1218px;top:511.66px;font-size:10.5px;line-height:13px;color:#f0f0f0;transform:scaleX(0.975);transform-origin:0 0;">Group 2</div>
<div class="a" style="left:1143px;top:529px;width:207px;height:22px;background:#535353;"></div>
<div class="a" style="left:1173px;top:529px;width:1px;height:22px;background:#3a3a3a;"></div>
<div class="a" style="left:1143px;top:551px;width:207px;height:1px;background:#3a3a3a;"></div>
<svg class="s" style="left:1152px;top:535px;" width="13" height="10" viewBox="0 0 13 10"><path d="M0.8 5C3 1.2 10 1.2 12.2 5C10 8.8 3 8.8 0.8 5Z" fill="#9c9c9c" stroke="#c4c4c4" stroke-width="1.2"/><circle cx="6.5" cy="5" r="2.9" fill="#3c3c3c"/><circle cx="7.4" cy="4" r="0.9" fill="#d8d8d8"/></svg>
<svg class="s" style="left:1179px;top:535px;" width="6" height="10" viewBox="0 0 6 10"><path d="M0 0L6 5L0 10Z" fill="#f0f0f0"/></svg>
<svg class="s" style="left:1191px;top:534px;" width="15" height="11" viewBox="0 0 15 11"><defs><linearGradient id="fd" x1="0" y1="0" x2="0" y2="1"><stop offset="0" stop-color="#e0e0e0"/><stop offset="1" stop-color="#a8a8a8"/></linearGradient></defs><path d="M0 1H6L7 2.5H15V11H0Z" fill="url(#fd)"/></svg>
<div class="t" style="left:1218px;top:534.66px;font-size:10.5px;line-height:13px;color:#f0f0f0;transform:scaleX(0.931);transform-origin:0 0;">Social Media Icons</div>
<div class="a" style="left:1143px;top:552px;width:207px;height:22px;background:#535353;"></div>
<div class="a" style="left:1173px;top:552px;width:1px;height:22px;background:#3a3a3a;"></div>
<div class="a" style="left:1143px;top:574px;width:207px;height:1px;background:#3a3a3a;"></div>
<svg class="s" style="left:1152px;top:558px;" width="13" height="10" viewBox="0 0 13 10"><path d="M0.8 5C3 1.2 10 1.2 12.2 5C10 8.8 3 8.8 0.8 5Z" fill="#9c9c9c" stroke="#c4c4c4" stroke-width="1.2"/><circle cx="6.5" cy="5" r="2.9" fill="#3c3c3c"/><circle cx="7.4" cy="4" r="0.9" fill="#d8d8d8"/></svg>
<svg class="s" style="left:1179px;top:558px;" width="6" height="10" viewBox="0 0 6 10"><path d="M0 0L6 5L0 10Z" fill="#f0f0f0"/></svg>
<svg class="s" style="left:1191px;top:557px;" width="15" height="11" viewBox="0 0 15 11"><defs><linearGradient id="fd" x1="0" y1="0" x2="0" y2="1"><stop offset="0" stop-color="#e0e0e0"/><stop offset="1" stop-color="#a8a8a8"/></linearGradient></defs><path d="M0 1H6L7 2.5H15V11H0Z" fill="url(#fd)"/></svg>
<div class="t" style="left:1218px;top:557.66px;font-size:10.5px;line-height:13px;color:#f0f0f0;transform:scaleX(0.960);transform-origin:0 0;">QR Code</div>
<div class="a" style="left:1143px;top:575px;width:207px;height:22px;background:#535353;"></div>
<div class="a" style="left:1173px;top:575px;width:1px;height:22px;background:#3a3a3a;"></div>
<div class="a" style="left:1143px;top:597px;width:207px;height:1px;background:#3a3a3a;"></div>
<svg class="s" style="left:1152px;top:581px;" width="13" height="10" viewBox="0 0 13 10"><path d="M0.8 5C3 1.2 10 1.2 12.2 5C10 8.8 3 8.8 0.8 5Z" fill="#9c9c9c" stroke="#c4c4c4" stroke-width="1.2"/><circle cx="6.5" cy="5" r="2.9" fill="#3c3c3c"/><circle cx="7.4" cy="4" r="0.9" fill="#d8d8d8"/></svg>
<svg class="s" style="left:1179px;top:581px;" width="6" height="10" viewBox="0 0 6 10"><path d="M0 0L6 5L0 10Z" fill="#f0f0f0"/></svg>
<svg class="s" style="left:1191px;top:580px;" width="15" height="11" viewBox="0 0 15 11"><defs><linearGradient id="fd" x1="0" y1="0" x2="0" y2="1"><stop offset="0" stop-color="#e0e0e0"/><stop offset="1" stop-color="#a8a8a8"/></linearGradient></defs><path d="M0 1H6L7 2.5H15V11H0Z" fill="url(#fd)"/></svg>
<div class="t" style="left:1218px;top:580.66px;font-size:10.5px;line-height:13px;color:#f0f0f0;transform:scaleX(0.946);transform-origin:0 0;">Website URL and phone...</div>
<div class="a" style="left:1143px;top:598px;width:207px;height:22px;background:#535353;"></div>
<div class="a" style="left:1173px;top:598px;width:1px;height:22px;background:#3a3a3a;"></div>
<div class="a" style="left:1143px;top:620px;width:207px;height:1px;background:#3a3a3a;"></div>
<svg class="s" style="left:1152px;top:604px;" width="13" height="10" viewBox="0 0 13 10"><path d="M0.8 5C3 1.2 10 1.2 12.2 5C10 8.8 3 8.8 0.8 5Z" fill="#9c9c9c" stroke="#c4c4c4" stroke-width="1.2"/><circle cx="6.5" cy="5" r="2.9" fill="#3c3c3c"/><circle cx="7.4" cy="4" r="0.9" fill="#d8d8d8"/></svg>
<svg class="s" style="left:1179px;top:604px;" width="6" height="10" viewBox="0 0 6 10"><path d="M0 0L6 5L0 10Z" fill="#f0f0f0"/></svg>
<svg class="s" style="left:1191px;top:603px;" width="15" height="11" viewBox="0 0 15 11"><defs><linearGradient id="fd" x1="0" y1="0" x2="0" y2="1"><stop offset="0" stop-color="#e0e0e0"/><stop offset="1" stop-color="#a8a8a8"/></linearGradient></defs><path d="M0 1H6L7 2.5H15V11H0Z" fill="url(#fd)"/></svg>
<div class="t" style="left:1218px;top:603.66px;font-size:10.5px;line-height:13px;color:#f0f0f0;transform:scaleX(0.964);transform-origin:0 0;">Background</div>
<div class="a" style="left:1143px;top:707px;width:223px;height:1px;background:#2e2e2e;"></div>
<div class="a" style="left:1143px;top:708px;width:223px;height:12px;background:#535353;border-top:1px solid #626262"></div>
<svg class="s" style="left:1164px;top:712px;" width="12" height="8" viewBox="0 0 12 8"><rect x="0.7" y="1" width="10.6" height="6" rx="3" fill="none" stroke="#8a8a8a" stroke-width="1.4"/></svg>
<div class="t" style="left:1190px;top:709px;font-size:12px;line-height:13px;color:#8a8a8a;font-style:italic">fx</div>
<div class="a" style="left:1215px;top:712px;width:12px;height:10px;background:#8a8a8a;"></div>
<svg class="s" style="left:1243px;top:712px;" width="11" height="11" viewBox="0 0 11 11"><circle cx="5.5" cy="5.5" r="5" fill="#8a8a8a"/><path d="M9 2L2 9" stroke="#535353"/></svg>
<div class="a" style="left:1270px;top:713px;width:13px;height:9px;background:#8a8a8a;"></div>
<div class="a" style="left:1297px;top:712px;width:12px;height:10px;background:#8a8a8a;"></div>
<svg class="s" style="left:1324px;top:711px;" width="12" height="10" viewBox="0 0 12 10"><rect x="1" y="2" width="10" height="1.5" fill="#8a8a8a"/><rect x="2" y="4" width="8" height="7" fill="none" stroke="#8a8a8a"/></svg>
<div class="a" style="left:410px;top:140px;width:320px;height:509px;background:#262626;box-shadow:0 2px 6px rgba(0,0,0,0.35)"></div>
<svg class="s" style="left:410px;top:140px;overflow:hidden" width="320" height="509" viewBox="0 0 320 509"><defs><linearGradient id="sky" x1="0" y1="0" x2="0" y2="1"><stop offset="0" stop-color="#7e5e2b"/><stop offset="0.5" stop-color="#77592c"/><stop offset="1" stop-color="#6a5230"/></linearGradient><linearGradient id="skyr" x1="0" y1="0" x2="0" y2="1"><stop offset="0" stop-color="#5a4c38" stop-opacity="0"/><stop offset="0.22" stop-color="#5b4c37" stop-opacity="0.95"/><stop offset="1" stop-color="#504333" stop-opacity="1"/></linearGradient><linearGradient id="skyrh" x1="0" y1="0" x2="1" y2="0"><stop offset="0" stop-color="#fff" stop-opacity="0"/><stop offset="0.25" stop-color="#fff" stop-opacity="1"/></linearGradient><mask id="mskr"><rect x="150" y="0" width="170" height="160" fill="url(#skyrh)"/></mask><filter id="bl" x="-5%" y="-5%" width="110%" height="110%"><feGaussianBlur stdDeviation="0.5"/></filter></defs><rect x="0" y="0" width="320" height="160" fill="url(#sky)"/><rect x="150" y="0" width="170" height="160" fill="url(#skyr)" mask="url(#mskr)"/><g filter="url(#bl)"><path d="M0 40L8 36L10 30L20 32L24 28L34 32L40 24L46 30L58 26L64 32L72 29L80 36L92 32L100 38L112 34L120 40L135 38L145 42L150 44L150 160H0Z" fill="#785a30"/><rect x="45.9" y="103.0" width="3.9" height="6.5" fill="#a07d48" opacity="0.7"/><rect x="10.5" y="130.4" width="6.5" height="9.5" fill="#8f6e3c" opacity="0.7"/><rect x="62.8" y="43.6" width="3.4" height="13.9" fill="#4e3b21" opacity="0.7"/><rect x="83.1" y="100.8" width="8.7" height="17.2" fill="#8f6e3c" opacity="0.7"/><rect x="84.9" y="137.5" width="5.4" height="6.0" fill="#4e3b21" opacity="0.7"/><rect x="16.5" y="91.3" width="5.5" height="17.0" fill="#a07d48" opacity="0.7"/><rect x="121.7" y="95.6" width="4.1" height="18.4" fill="#5e4726" opacity="0.7"/><rect x="11.0" y="93.8" width="7.3" height="18.0" fill="#6b522d" opacity="0.7"/><rect x="100.8" y="67.3" width="5.6" height="17.3" fill="#6b522d" opacity="0.7"/><rect x="51.7" y="53.1" width="4.5" height="21.4" fill="#8f6e3c" opacity="0.7"/><rect x="84.5" y="126.8" width="6.2" height="20.3" fill="#5e4726" opacity="0.7"/><rect x="89.8" y="88.3" width="3.4" height="8.5" fill="#5e4726" opacity="0.7"/><rect x="19.4" y="38.2" width="5.9" height="19.0" fill="#4e3b21" opacity="0.7"/><rect x="81.9" y="120.7" width="7.7" height="12.1" fill="#5e4726" opacity="0.7"/><rect x="87.5" y="82.4" width="6.5" height="22.6" fill="#5e4726" opacity="0.7"/><rect x="69.0" y="40.4" width="7.0" height="19.7" fill="#826437" opacity="0.7"/><rect x="85.0" y="81.2" width="7.1" height="20.0" fill="#826437" opacity="0.7"/><rect x="49.4" y="71.7" width="8.6" height="17.8" fill="#6b522d" opacity="0.7"/><rect x="5.1" y="47.7" width="7.6" height="10.2" fill="#6b522d" opacity="0.7"/><rect x="137.2" y="51.6" width="6.0" height="13.4" fill="#5e4726" opacity="0.7"/><rect x="132.0" y="125.6" width="7.9" height="10.8" fill="#6b522d" opacity="0.7"/><rect x="147.9" y="74.3" width="7.1" height="9.8" fill="#8f6e3c" opacity="0.7"/><rect x="23.1" y="58.7" width="4.4" height="15.2" fill="#a07d48" opacity="0.7"/><rect x="24.1" y="49.4" width="4.7" height="16.2" fill="#a07d48" opacity="0.7"/><rect x="83.2" y="107.2" width="8.7" height="15.8" fill="#a07d48" opacity="0.7"/><rect x="96.9" y="82.4" width="7.4" height="23.3" fill="#4e3b21" opacity="0.7"/><rect x="100.8" y="76.2" width="6.4" height="13.3" fill="#6b522d" opacity="0.7"/><rect x="93.7" y="41.1" width="3.4" height="9.4" fill="#8f6e3c" opacity="0.7"/><rect x="12.9" y="44.9" width="6.6" height="16.9" fill="#a07d48" opacity="0.7"/><rect x="11.6" y="36.7" width="5.2" height="23.4" fill="#a07d48" opacity="0.7"/><rect x="53.9" y="135.3" width="6.8" height="17.6" fill="#6b522d" opacity="0.7"/><rect x="14.9" y="139.3" width="8.1" height="14.8" fill="#6b522d" opacity="0.7"/><rect x="44.0" y="113.5" width="3.9" height="20.5" fill="#6b522d" opacity="0.7"/><rect x="123.6" y="36.4" width="4.0" height="25.0" fill="#a07d48" opacity="0.7"/><rect x="51.7" y="130.9" width="7.1" height="20.9" fill="#5e4726" opacity="0.7"/><rect x="146.7" y="107.8" width="8.2" height="10.5" fill="#5e4726" opacity="0.7"/><rect x="135.9" y="57.6" width="5.1" height="16.4" fill="#a07d48" opacity="0.7"/><rect x="46.8" y="120.0" width="4.3" height="25.7" fill="#4e3b21" opacity="0.7"/><rect x="26.1" y="76.5" width="4.4" height="21.9" fill="#8f6e3c" opacity="0.7"/><rect x="75.7" y="37.1" width="5.1" height="5.6" fill="#5e4726" opacity="0.7"/><rect x="68.7" y="98.1" width="4.2" height="12.2" fill="#4e3b21" opacity="0.7"/><rect x="140.3" y="135.2" width="8.9" height="12.7" fill="#8f6e3c" opacity="0.7"/><rect x="11.7" y="69.8" width="5.8" height="15.1" fill="#a07d48" opacity="0.7"/><rect x="125.4" y="103.2" width="5.9" height="21.8" fill="#8f6e3c" opacity="0.7"/><rect x="124.5" y="75.2" width="3.7" height="19.9" fill="#8f6e3c" opacity="0.7"/><rect x="69.6" y="117.6" width="4.1" height="12.0" fill="#4e3b21" opacity="0.7"/><rect x="141.7" y="83.1" width="7.3" height="20.6" fill="#8f6e3c" opacity="0.7"/><rect x="107.6" y="47.5" width="4.0" height="8.2" fill="#6b522d" opacity="0.7"/><rect x="120.2" y="121.6" width="3.9" height="25.6" fill="#826437" opacity="0.7"/><rect x="140.4" y="92.1" width="3.9" height="5.4" fill="#4e3b21" opacity="0.7"/><rect x="145.5" y="89.8" width="6.9" height="24.6" fill="#6b522d" opacity="0.7"/><rect x="147.9" y="126.6" width="4.2" height="5.6" fill="#8f6e3c" opacity="0.7"/><rect x="41.1" y="96.2" width="4.4" height="10.4" fill="#6b522d" opacity="0.7"/><rect x="124.5" y="112.4" width="3.4" height="23.9" fill="#826437" opacity="0.7"/><rect x="85.8" y="78.6" width="8.4" height="24.3" fill="#a07d48" opacity="0.7"/><rect x="16.1" y="88.1" width="3.9" height="23.3" fill="#4e3b21" opacity="0.7"/><rect x="24.2" y="118.7" width="3.0" height="8.6" fill="#6b522d" opacity="0.7"/><rect x="91.3" y="40.5" width="3.7" height="19.3" fill="#a07d48" opacity="0.7"/><rect x="81.5" y="45.2" width="7.7" height="16.8" fill="#8f6e3c" opacity="0.7"/><rect x="25.5" y="44.4" width="3.3" height="14.5" fill="#8f6e3c" opacity="0.7"/><rect x="113.0" y="81.0" width="8.5" height="17.9" fill="#a07d48" opacity="0.7"/><rect x="89.3" y="63.4" width="4.2" height="15.7" fill="#4e3b21" opacity="0.7"/><rect x="69.6" y="108.1" width="8.6" height="23.4" fill="#5e4726" opacity="0.7"/><rect x="138.1" y="55.5" width="8.4" height="14.4" fill="#6b522d" opacity="0.7"/><rect x="14.7" y="41.7" width="5.7" height="10.1" fill="#8f6e3c" opacity="0.7"/><rect x="28.8" y="47.0" width="4.8" height="21.3" fill="#826437" opacity="0.7"/><rect x="95.1" y="60.8" width="5.2" height="7.9" fill="#6b522d" opacity="0.7"/><rect x="29.8" y="76.2" width="8.7" height="15.2" fill="#826437" opacity="0.7"/><rect x="124.2" y="79.7" width="4.0" height="15.8" fill="#5e4726" opacity="0.7"/><rect x="60.9" y="43.8" width="5.1" height="12.7" fill="#5e4726" opacity="0.7"/><rect x="81.3" y="35.9" width="5.6" height="12.0" fill="#a07d48" opacity="0.7"/><rect x="41.5" y="46.0" width="8.8" height="24.3" fill="#8f6e3c" opacity="0.7"/><rect x="145.6" y="62.1" width="3.6" height="5.8" fill="#4e3b21" opacity="0.7"/><rect x="24.0" y="120.9" width="7.5" height="22.8" fill="#826437" opacity="0.7"/><rect x="122.1" y="49.8" width="4.6" height="24.3" fill="#a07d48" opacity="0.7"/><rect x="72.2" y="63.6" width="5.0" height="21.8" fill="#8f6e3c" opacity="0.7"/><rect x="61.5" y="133.5" width="3.4" height="18.3" fill="#4e3b21" opacity="0.7"/><rect x="36.1" y="57.6" width="6.6" height="10.6" fill="#8f6e3c" opacity="0.7"/><rect x="65.9" y="92.6" width="5.0" height="24.5" fill="#5e4726" opacity="0.7"/><rect x="91.7" y="109.2" width="3.3" height="24.7" fill="#8f6e3c" opacity="0.7"/><rect x="36.3" y="132.8" width="4.1" height="18.2" fill="#a07d48" opacity="0.7"/><rect x="113.0" y="87.0" width="4.7" height="8.7" fill="#5e4726" opacity="0.7"/><rect x="119.8" y="37.9" width="9.0" height="5.4" fill="#a07d48" opacity="0.7"/><rect x="80.9" y="84.3" width="4.1" height="24.6" fill="#8f6e3c" opacity="0.7"/><rect x="97.4" y="103.6" width="6.9" height="16.5" fill="#6b522d" opacity="0.7"/><rect x="145.4" y="56.8" width="4.8" height="9.8" fill="#8f6e3c" opacity="0.7"/><rect x="124.2" y="101.4" width="7.2" height="13.5" fill="#5e4726" opacity="0.7"/><rect x="147.2" y="35.5" width="8.0" height="18.1" fill="#5e4726" opacity="0.7"/><rect x="62.3" y="104.5" width="3.3" height="13.0" fill="#a07d48" opacity="0.7"/><rect x="99.3" y="59.7" width="4.7" height="11.2" fill="#6b522d" opacity="0.7"/><rect x="24.5" y="34.4" width="4.6" height="12.6" fill="#5e4726" opacity="0.7"/><rect x="145.8" y="59.9" width="6.3" height="25.3" fill="#5e4726" opacity="0.7"/><rect x="29.6" y="69.5" width="4.1" height="6.8" fill="#5e4726" opacity="0.7"/><rect x="73.4" y="87.5" width="4.2" height="5.1" fill="#5e4726" opacity="0.7"/><rect x="121.8" y="96.2" width="3.9" height="13.3" fill="#5e4726" opacity="0.7"/><rect x="42.9" y="96.1" width="4.4" height="16.1" fill="#4e3b21" opacity="0.7"/><rect x="19.9" y="117.1" width="8.4" height="17.5" fill="#4e3b21" opacity="0.7"/><rect x="46.2" y="49.8" width="8.9" height="20.2" fill="#826437" opacity="0.7"/><rect x="18.3" y="109.8" width="7.9" height="15.8" fill="#6b522d" opacity="0.7"/><rect x="109.0" y="48.8" width="7.9" height="16.0" fill="#a07d48" opacity="0.7"/><rect x="83.5" y="35.7" width="7.9" height="19.4" fill="#4e3b21" opacity="0.7"/><rect x="133.5" y="107.5" width="7.1" height="9.8" fill="#8f6e3c" opacity="0.7"/><rect x="2.4" y="135.7" width="6.8" height="12.9" fill="#6b522d" opacity="0.7"/><rect x="82.0" y="100.4" width="6.8" height="19.3" fill="#6b522d" opacity="0.7"/><rect x="36.6" y="41.4" width="5.7" height="24.6" fill="#a07d48" opacity="0.7"/><rect x="10.2" y="113.0" width="6.2" height="15.0" fill="#4e3b21" opacity="0.7"/><rect x="7.5" y="111.3" width="4.6" height="9.3" fill="#826437" opacity="0.7"/><rect x="96.1" y="123.6" width="5.8" height="6.6" fill="#826437" opacity="0.7"/><rect x="40.2" y="101.1" width="3.3" height="9.2" fill="#a07d48" opacity="0.7"/><rect x="18.7" y="112.8" width="4.5" height="11.4" fill="#a07d48" opacity="0.7"/><rect x="16.5" y="85.5" width="5.9" height="25.4" fill="#8f6e3c" opacity="0.7"/><rect x="102.6" y="64.8" width="7.1" height="15.8" fill="#6b522d" opacity="0.7"/><rect x="67.7" y="139.3" width="7.6" height="16.5" fill="#5e4726" opacity="0.7"/><rect x="146.6" y="35.9" width="8.6" height="14.6" fill="#4e3b21" opacity="0.7"/><rect x="74.0" y="139.4" width="9.0" height="13.1" fill="#8f6e3c" opacity="0.7"/><rect x="7.5" y="113.2" width="3.5" height="10.5" fill="#5e4726" opacity="0.7"/><rect x="16.4" y="87.9" width="7.9" height="23.6" fill="#826437" opacity="0.7"/><rect x="52.2" y="126.9" width="6.0" height="13.3" fill="#8f6e3c" opacity="0.7"/><rect x="-3.4" y="81.8" width="6.0" height="11.3" fill="#8f6e3c" opacity="0.7"/><rect x="60.1" y="46.8" width="5.3" height="12.0" fill="#5e4726" opacity="0.7"/><rect x="111.6" y="46.7" width="8.0" height="24.5" fill="#826437" opacity="0.7"/><rect x="-2.2" y="60.8" width="7.4" height="6.4" fill="#6b522d" opacity="0.7"/><rect x="149.8" y="72.2" width="6.5" height="14.0" fill="#5e4726" opacity="0.7"/><rect x="127.6" y="39.5" width="4.7" height="18.9" fill="#826437" opacity="0.7"/><rect x="140.1" y="62.2" width="4.5" height="15.7" fill="#8f6e3c" opacity="0.7"/><rect x="115.1" y="79.3" width="7.7" height="5.6" fill="#4e3b21" opacity="0.7"/><rect x="93.2" y="133.7" width="8.5" height="16.5" fill="#826437" opacity="0.7"/><rect x="8.4" y="77.6" width="8.6" height="17.9" fill="#8f6e3c" opacity="0.7"/><rect x="95.3" y="39.2" width="4.7" height="24.5" fill="#8f6e3c" opacity="0.7"/><rect x="22.3" y="63.9" width="5.5" height="10.4" fill="#826437" opacity="0.7"/><rect x="146.3" y="103.5" width="4.6" height="11.3" fill="#a07d48" opacity="0.7"/><rect x="99.0" y="102.2" width="3.7" height="6.6" fill="#a07d48" opacity="0.7"/><rect x="135.5" y="57.3" width="6.0" height="24.0" fill="#4e3b21" opacity="0.7"/><rect x="65.3" y="54.4" width="3.8" height="6.9" fill="#5e4726" opacity="0.7"/><rect x="81.6" y="73.0" width="4.9" height="22.0" fill="#8f6e3c" opacity="0.7"/><rect x="132.6" y="77.8" width="7.5" height="13.7" fill="#a07d48" opacity="0.7"/><rect x="28.3" y="113.7" width="4.6" height="15.5" fill="#a07d48" opacity="0.7"/><rect x="145.0" y="87.4" width="3.8" height="18.2" fill="#4e3b21" opacity="0.7"/><rect x="126.7" y="129.1" width="3.6" height="13.1" fill="#826437" opacity="0.7"/><rect x="64.7" y="124.0" width="8.7" height="23.3" fill="#8f6e3c" opacity="0.7"/><rect x="15.6" y="115.0" width="5.6" height="21.9" fill="#a07d48" opacity="0.7"/><rect x="71.4" y="132.6" width="3.4" height="24.5" fill="#a07d48" opacity="0.7"/><rect x="127.7" y="60.3" width="8.8" height="7.3" fill="#8f6e3c" opacity="0.7"/><rect x="19.4" y="45.5" width="8.8" height="22.3" fill="#826437" opacity="0.7"/><rect x="95.7" y="82.5" width="7.6" height="16.6" fill="#8f6e3c" opacity="0.7"/><rect x="-3.8" y="94.4" width="3.8" height="5.8" fill="#826437" opacity="0.7"/><rect x="42.8" y="60.7" width="3.8" height="18.4" fill="#826437" opacity="0.7"/><rect x="113.6" y="65.8" width="3.6" height="24.8" fill="#8f6e3c" opacity="0.7"/><rect x="55.8" y="97.7" width="4.3" height="5.2" fill="#5e4726" opacity="0.7"/><rect x="149.4" y="67.5" width="4.7" height="22.6" fill="#8f6e3c" opacity="0.7"/><rect x="69.2" y="60.2" width="4.4" height="25.2" fill="#826437" opacity="0.7"/><rect x="96.0" y="54.6" width="3.3" height="23.6" fill="#826437" opacity="0.7"/><rect x="60.7" y="104.7" width="4.5" height="24.4" fill="#8f6e3c" opacity="0.7"/><rect x="71.9" y="110.1" width="7.2" height="12.6" fill="#6b522d" opacity="0.7"/><rect x="26.5" y="112.3" width="7.8" height="15.6" fill="#8f6e3c" opacity="0.7"/><rect x="72.3" y="115.2" width="4.2" height="9.1" fill="#6b522d" opacity="0.7"/><rect x="30.1" y="65.3" width="7.6" height="25.0" fill="#6b522d" opacity="0.7"/><rect x="90.0" y="85.4" width="8.4" height="24.1" fill="#8f6e3c" opacity="0.7"/><rect x="142.1" y="75.7" width="3.9" height="9.5" fill="#a07d48" opacity="0.7"/><rect x="17.9" y="40.4" width="3.3" height="13.3" fill="#826437" opacity="0.7"/><rect x="132.1" y="139.7" width="7.4" height="24.6" fill="#5e4726" opacity="0.7"/><rect x="25.4" y="89.6" width="6.9" height="14.8" fill="#5e4726" opacity="0.7"/><rect x="98.3" y="73.6" width="5.3" height="12.0" fill="#8f6e3c" opacity="0.7"/><rect x="12.8" y="42.6" width="3.5" height="13.8" fill="#8f6e3c" opacity="0.7"/><rect x="82.4" y="74.3" width="7.6" height="21.1" fill="#5e4726" opacity="0.7"/><rect x="122.6" y="39.2" width="5.6" height="14.9" fill="#5e4726" opacity="0.7"/><rect x="79.4" y="68.3" width="5.7" height="20.5" fill="#6b522d" opacity="0.7"/><rect x="0.7" y="120.1" width="5.5" height="21.1" fill="#8f6e3c" opacity="0.7"/><rect x="53.8" y="119.2" width="5.8" height="6.3" fill="#8f6e3c" opacity="0.7"/><rect x="111.1" y="69.9" width="8.4" height="10.7" fill="#a07d48" opacity="0.7"/><rect x="2.7" y="107.1" width="7.5" height="24.4" fill="#5e4726" opacity="0.7"/><rect x="-3.4" y="131.1" width="7.5" height="18.3" fill="#8f6e3c" opacity="0.7"/><rect x="-0.3" y="84.4" width="4.4" height="25.1" fill="#4e3b21" opacity="0.7"/><rect x="55.5" y="79.6" width="4.5" height="15.4" fill="#6b522d" opacity="0.7"/><rect x="24.2" y="112.3" width="7.8" height="22.3" fill="#4e3b21" opacity="0.7"/><rect x="19.3" y="125.3" width="4.4" height="14.7" fill="#4e3b21" opacity="0.7"/><rect x="116.5" y="54.9" width="3.5" height="20.8" fill="#8f6e3c" opacity="0.7"/><rect x="58.8" y="85.1" width="6.9" height="16.4" fill="#8f6e3c" opacity="0.7"/><rect x="147.0" y="138.7" width="8.3" height="10.6" fill="#8f6e3c" opacity="0.7"/><rect x="28.1" y="138.8" width="5.5" height="25.4" fill="#8f6e3c" opacity="0.7"/><rect x="32.1" y="99.8" width="5.5" height="19.2" fill="#826437" opacity="0.7"/><rect x="78.9" y="114.5" width="7.6" height="21.4" fill="#5e4726" opacity="0.7"/><rect x="41.2" y="73.5" width="6.4" height="20.5" fill="#8f6e3c" opacity="0.7"/><rect x="63.7" y="59.0" width="4.1" height="10.9" fill="#a07d48" opacity="0.7"/><rect x="25.0" y="60.7" width="3.4" height="10.2" fill="#a07d48" opacity="0.7"/><rect x="31.6" y="103.3" width="7.9" height="25.8" fill="#8f6e3c" opacity="0.7"/><rect x="-3.3" y="58.5" width="8.3" height="14.4" fill="#5e4726" opacity="0.7"/><rect x="2.2" y="46.6" width="4.8" height="9.0" fill="#4e3b21" opacity="0.7"/><rect x="85.8" y="73.5" width="8.6" height="23.2" fill="#6b522d" opacity="0.7"/><rect x="88.9" y="104.5" width="7.6" height="5.1" fill="#826437" opacity="0.7"/><rect x="87.8" y="57.1" width="6.7" height="12.7" fill="#8f6e3c" opacity="0.7"/><rect x="2.8" y="38.1" width="9.0" height="20.4" fill="#8f6e3c" opacity="0.7"/><rect x="121.5" y="77.4" width="7.9" height="12.8" fill="#a07d48" opacity="0.7"/><rect x="44.1" y="118.3" width="4.2" height="16.5" fill="#8f6e3c" opacity="0.7"/><rect x="58.9" y="104.4" width="7.8" height="8.2" fill="#a07d48" opacity="0.7"/><rect x="10.0" y="107.7" width="4.0" height="13.6" fill="#5e4726" opacity="0.7"/><rect x="98.8" y="39.4" width="5.5" height="20.7" fill="#5e4726" opacity="0.7"/><rect x="59.8" y="115.3" width="3.1" height="21.8" fill="#826437" opacity="0.7"/><rect x="26.4" y="55.6" width="7.4" height="5.1" fill="#8f6e3c" opacity="0.7"/><rect x="61.3" y="77.1" width="7.9" height="23.5" fill="#6b522d" opacity="0.7"/><rect x="115.1" y="39.5" width="3.8" height="8.0" fill="#4e3b21" opacity="0.7"/><rect x="136.1" y="100.0" width="3.5" height="12.8" fill="#a07d48" opacity="0.7"/><rect x="22.4" y="51.2" width="5.1" height="8.6" fill="#8f6e3c" opacity="0.7"/><rect x="12.8" y="119.3" width="5.9" height="25.3" fill="#8f6e3c" opacity="0.7"/><rect x="42.4" y="38.6" width="8.0" height="24.2" fill="#5e4726" opacity="0.7"/><rect x="4.2" y="75.1" width="8.6" height="24.0" fill="#a07d48" opacity="0.7"/><rect x="102.0" y="101.9" width="8.3" height="23.0" fill="#a07d48" opacity="0.7"/><rect x="58.3" y="121.9" width="8.1" height="8.8" fill="#8f6e3c" opacity="0.7"/><rect x="2.4" y="50.6" width="8.6" height="12.5" fill="#8f6e3c" opacity="0.7"/><rect x="34.0" y="129.1" width="7.3" height="5.9" fill="#a07d48" opacity="0.7"/><rect x="125.7" y="104.8" width="7.0" height="11.8" fill="#6b522d" opacity="0.7"/><rect x="88.3" y="100.5" width="6.3" height="11.4" fill="#6b522d" opacity="0.7"/><rect x="43.5" y="75.3" width="4.5" height="12.7" fill="#a07d48" opacity="0.7"/><rect x="63.5" y="99.6" width="3.1" height="15.3" fill="#8f6e3c" opacity="0.7"/><rect x="64.8" y="120.8" width="6.7" height="22.6" fill="#4e3b21" opacity="0.7"/><rect x="68.9" y="47.6" width="3.6" height="14.0" fill="#8f6e3c" opacity="0.7"/><rect x="119.6" y="103.7" width="6.0" height="5.9" fill="#8f6e3c" opacity="0.7"/><rect x="8.7" y="116.4" width="7.4" height="15.7" fill="#8f6e3c" opacity="0.7"/><rect x="111.8" y="103.2" width="8.4" height="21.5" fill="#8f6e3c" opacity="0.7"/><rect x="128.0" y="111.6" width="9.0" height="22.1" fill="#8f6e3c" opacity="0.7"/><rect x="19.7" y="110.3" width="0.9" height="18.6" fill="#4a381f" opacity="0.6"/><rect x="121.6" y="102.6" width="0.9" height="30.6" fill="#4a381f" opacity="0.6"/><rect x="108.2" y="53.8" width="0.9" height="35.0" fill="#4a381f" opacity="0.6"/><rect x="91.6" y="56.4" width="0.9" height="19.7" fill="#4a381f" opacity="0.6"/><rect x="92.0" y="111.9" width="0.9" height="23.7" fill="#4a381f" opacity="0.6"/><rect x="38.1" y="117.0" width="0.9" height="24.4" fill="#4a381f" opacity="0.6"/><rect x="88.8" y="87.3" width="0.9" height="17.1" fill="#4a381f" opacity="0.6"/><rect x="55.8" y="51.9" width="0.9" height="22.1" fill="#4a381f" opacity="0.6"/><rect x="95.5" y="58.6" width="0.9" height="19.8" fill="#4a381f" opacity="0.6"/><rect x="56.5" y="102.3" width="0.9" height="17.9" fill="#4a381f" opacity="0.6"/><rect x="115.2" y="39.1" width="0.9" height="35.7" fill="#4a381f" opacity="0.6"/><rect x="144.9" y="73.5" width="0.9" height="25.6" fill="#4a381f" opacity="0.6"/><rect x="103.3" y="111.2" width="0.9" height="17.6" fill="#4a381f" opacity="0.6"/><rect x="80.4" y="107.8" width="0.9" height="32.1" fill="#4a381f" opacity="0.6"/><rect x="55.7" y="66.9" width="0.9" height="21.1" fill="#4a381f" opacity="0.6"/><rect x="21.9" y="63.1" width="0.9" height="12.4" fill="#4a381f" opacity="0.6"/><rect x="34.5" y="87.3" width="0.9" height="38.7" fill="#4a381f" opacity="0.6"/><rect x="44.5" y="78.9" width="0.9" height="19.3" fill="#4a381f" opacity="0.6"/><rect x="144.9" y="109.0" width="0.9" height="37.9" fill="#4a381f" opacity="0.6"/><rect x="134.4" y="97.3" width="0.9" height="32.4" fill="#4a381f" opacity="0.6"/><rect x="33.2" y="59.7" width="0.9" height="28.8" fill="#4a381f" opacity="0.6"/><rect x="62.7" y="65.9" width="0.9" height="11.4" fill="#4a381f" opacity="0.6"/><rect x="73.3" y="87.1" width="0.9" height="11.4" fill="#4a381f" opacity="0.6"/><rect x="8.2" y="83.2" width="0.9" height="19.1" fill="#4a381f" opacity="0.6"/><rect x="78.5" y="80.4" width="0.9" height="22.4" fill="#4a381f" opacity="0.6"/><rect x="45.2" y="46.4" width="0.9" height="21.0" fill="#4a381f" opacity="0.6"/><rect x="124.3" y="48.5" width="0.9" height="10.4" fill="#4a381f" opacity="0.6"/><rect x="120.2" y="95.1" width="0.9" height="23.5" fill="#4a381f" opacity="0.6"/><rect x="9.6" y="47.3" width="0.9" height="30.0" fill="#4a381f" opacity="0.6"/><rect x="40.5" y="104.0" width="0.9" height="39.0" fill="#4a381f" opacity="0.6"/><rect x="8.4" y="104.8" width="0.9" height="36.8" fill="#4a381f" opacity="0.6"/><rect x="89.2" y="84.2" width="0.9" height="28.1" fill="#4a381f" opacity="0.6"/><rect x="77.6" y="76.9" width="0.9" height="15.0" fill="#4a381f" opacity="0.6"/><rect x="0.1" y="40.2" width="0.9" height="10.8" fill="#4a381f" opacity="0.6"/><rect x="27.8" y="48.5" width="0.9" height="37.4" fill="#4a381f" opacity="0.6"/><rect x="15.7" y="87.1" width="0.9" height="29.7" fill="#4a381f" opacity="0.6"/><rect x="29.6" y="70.1" width="0.9" height="25.5" fill="#4a381f" opacity="0.6"/><rect x="96.4" y="90.0" width="0.9" height="22.5" fill="#4a381f" opacity="0.6"/><rect x="92.0" y="78.2" width="0.9" height="11.9" fill="#4a381f" opacity="0.6"/><rect x="93.9" y="119.5" width="0.9" height="31.7" fill="#4a381f" opacity="0.6"/><rect x="71.7" y="80.8" width="0.9" height="21.3" fill="#4a381f" opacity="0.6"/><rect x="65.5" y="112.5" width="0.9" height="12.4" fill="#4a381f" opacity="0.6"/><rect x="98.3" y="49.9" width="0.9" height="39.9" fill="#4a381f" opacity="0.6"/><rect x="39.2" y="89.7" width="0.9" height="13.7" fill="#4a381f" opacity="0.6"/><rect x="133.7" y="113.6" width="0.9" height="38.3" fill="#4a381f" opacity="0.6"/><rect x="28" y="68" width="28" height="100" fill="#4d3c23"/><rect x="30" y="68" width="1.5" height="100" fill="#6a5333"/><rect x="147" y="6" width="13" height="160" fill="#4f3e26"/><rect x="157" y="6" width="3" height="160" fill="#6c5434"/><rect x="31" y="29" width="4" height="20" fill="#6a5230"/><rect x="169" y="35" width="16" height="130" fill="#584629"/><rect x="160" y="40" width="9" height="130" fill="#7d6238"/><path d="M170 60L180 52L196 54L205 56L215 60L233 56V160H170Z" fill="#4a3b27"/><path d="M252 55L262 58L275 52L290 60L300 54L320 58V160H252Z" fill="#463826"/><rect x="205.8" y="83.6" width="4.5" height="16.5" fill="#3c2f1f" opacity="0.8"/><rect x="287.2" y="66.9" width="9.2" height="28.3" fill="#3c2f1f" opacity="0.8"/><rect x="303.6" y="77.8" width="4.9" height="12.2" fill="#4a3b27" opacity="0.8"/><rect x="201.6" y="97.5" width="11.4" height="28.0" fill="#3c2f1f" opacity="0.8"/><rect x="194.8" y="82.1" width="7.9" height="27.8" fill="#33291c" opacity="0.8"/><rect x="262.8" y="84.9" width="10.9" height="17.3" fill="#6a5538" opacity="0.8"/><rect x="295.2" y="93.6" width="11.0" height="28.9" fill="#33291c" opacity="0.8"/><rect x="201.2" y="90.5" width="12.8" height="20.9" fill="#33291c" opacity="0.8"/><rect x="177.1" y="61.5" width="13.1" height="8.7" fill="#3c2f1f" opacity="0.8"/><rect x="261.4" y="99.0" width="5.6" height="6.7" fill="#3c2f1f" opacity="0.8"/><rect x="171.5" y="83.5" width="10.9" height="7.6" fill="#3c2f1f" opacity="0.8"/><rect x="172.2" y="89.3" width="12.6" height="25.6" fill="#4a3b27" opacity="0.8"/><rect x="292.0" y="58.0" width="12.9" height="28.7" fill="#3c2f1f" opacity="0.8"/><rect x="181.6" y="60.0" width="6.1" height="28.8" fill="#3c2f1f" opacity="0.8"/><rect x="306.2" y="58.9" width="11.5" height="21.2" fill="#3c2f1f" opacity="0.8"/><rect x="239.0" y="90.6" width="5.3" height="10.9" fill="#3c2f1f" opacity="0.8"/><rect x="214.5" y="55.9" width="8.2" height="28.3" fill="#5a4830" opacity="0.8"/><rect x="172.5" y="96.0" width="11.6" height="18.1" fill="#6a5538" opacity="0.8"/><rect x="297.0" y="56.4" width="10.2" height="6.7" fill="#33291c" opacity="0.8"/><rect x="245.4" y="76.1" width="5.0" height="18.9" fill="#3c2f1f" opacity="0.8"/><rect x="198.6" y="59.1" width="12.6" height="10.1" fill="#5a4830" opacity="0.8"/><rect x="165.2" y="89.3" width="6.0" height="6.1" fill="#3c2f1f" opacity="0.8"/><rect x="241.1" y="90.9" width="8.9" height="29.2" fill="#4a3b27" opacity="0.8"/><rect x="256.8" y="78.2" width="13.6" height="28.7" fill="#6a5538" opacity="0.8"/><rect x="209.0" y="86.5" width="6.1" height="10.0" fill="#33291c" opacity="0.8"/><rect x="310.5" y="77.1" width="11.7" height="19.5" fill="#3c2f1f" opacity="0.8"/><rect x="181.2" y="59.3" width="7.3" height="27.4" fill="#33291c" opacity="0.8"/><rect x="280.5" y="84.1" width="8.2" height="10.9" fill="#5a4830" opacity="0.8"/><rect x="205.8" y="77.6" width="13.0" height="29.6" fill="#33291c" opacity="0.8"/><rect x="262.8" y="60.7" width="13.4" height="24.1" fill="#6a5538" opacity="0.8"/><rect x="281.7" y="70.7" width="10.5" height="18.5" fill="#5a4830" opacity="0.8"/><rect x="299.5" y="79.9" width="8.5" height="10.1" fill="#5a4830" opacity="0.8"/><rect x="233.0" y="81.1" width="11.7" height="14.0" fill="#4a3b27" opacity="0.8"/><rect x="264.6" y="77.8" width="11.0" height="13.2" fill="#5a4830" opacity="0.8"/><rect x="274.0" y="62.0" width="12.4" height="29.4" fill="#4a3b27" opacity="0.8"/><rect x="277.1" y="70.7" width="10.0" height="13.9" fill="#4a3b27" opacity="0.8"/><rect x="194.3" y="87.8" width="13.8" height="10.0" fill="#3c2f1f" opacity="0.8"/><rect x="267.0" y="61.8" width="6.0" height="25.1" fill="#4a3b27" opacity="0.8"/><rect x="278.7" y="63.8" width="8.3" height="27.9" fill="#3c2f1f" opacity="0.8"/><rect x="208.5" y="75.9" width="12.9" height="15.6" fill="#3c2f1f" opacity="0.8"/><rect x="233" y="14" width="19" height="150" fill="#77603f"/><rect x="235.0" y="16" width="1.2" height="150" fill="#a08058" opacity="0.6"/><rect x="238.5" y="16" width="1.2" height="150" fill="#a08058" opacity="0.6"/><rect x="242.0" y="16" width="1.2" height="150" fill="#a08058" opacity="0.6"/><rect x="245.5" y="16" width="1.2" height="150" fill="#a08058" opacity="0.6"/><rect x="249.0" y="16" width="1.2" height="150" fill="#a08058" opacity="0.6"/><rect x="240" y="0" width="1.3" height="15" fill="#6a5536"/><path d="M190 60H240M232 58V75M266 60H300M220 62L224 70" stroke="#3a2e1f" stroke-width="0.7"/></g><defs><linearGradient id="wh" x1="0" y1="0" x2="1" y2="1"><stop offset="0" stop-color="#f9f9f9"/><stop offset="1" stop-color="#f3f3f3"/></linearGradient></defs><path d="M0 140L166 78L320 147V443L230 463L0 402Z" fill="url(#wh)"/><clipPath id="wclip"><path d="M0 140L166 78L320 147V443L230 463L0 402Z"/></clipPath><g clip-path="url(#wclip)" opacity="0.3"><path d="M-20.5 71.3L39.8 73.1L-4.4 104.5Z" fill="#ececec"/><path d="M39.8 73.1L50.4 126.0L-4.4 104.5Z" fill="#e9e8e7"/><path d="M39.8 73.1L105.0 57.0L50.4 126.0Z" fill="#ececec"/><path d="M105.0 57.0L100.9 122.2L50.4 126.0Z" fill="#f1f1f1"/><path d="M105.0 57.0L135.5 80.1L100.9 122.2Z" fill="#ececec"/><path d="M135.5 80.1L161.9 101.9L100.9 122.2Z" fill="#f4f4f4"/><path d="M135.5 80.1L200.4 62.0L161.9 101.9Z" fill="#f4f4f4"/><path d="M200.4 62.0L220.3 117.7L161.9 101.9Z" fill="#f1f1f1"/><path d="M200.4 62.0L284.8 69.1L220.3 117.7Z" fill="#fafafa"/><path d="M284.8 69.1L257.1 100.9L220.3 117.7Z" fill="#f4f4f4"/><path d="M284.8 69.1L333.5 69.3L257.1 100.9Z" fill="#e9e8e7"/><path d="M333.5 69.3L334.6 114.2L257.1 100.9Z" fill="#e9e8e7"/><path d="M-4.4 104.5L50.4 126.0L-1.2 171.4Z" fill="#f4f4f4"/><path d="M50.4 126.0L53.6 172.6L-1.2 171.4Z" fill="#e6e5e4"/><path d="M50.4 126.0L100.9 122.2L53.6 172.6Z" fill="#f4f4f4"/><path d="M100.9 122.2L95.8 169.0L53.6 172.6Z" fill="#e6e5e4"/><path d="M100.9 122.2L161.9 101.9L95.8 169.0Z" fill="#f4f4f4"/><path d="M161.9 101.9L152.8 173.1L95.8 169.0Z" fill="#dfdedd"/><path d="M161.9 101.9L220.3 117.7L152.8 173.1Z" fill="#f4f4f4"/><path d="M220.3 117.7L225.2 147.9L152.8 173.1Z" fill="#dfdedd"/><path d="M220.3 117.7L257.1 100.9L225.2 147.9Z" fill="#e9e8e7"/><path d="M257.1 100.9L250.4 151.5L225.2 147.9Z" fill="#f4f4f4"/><path d="M257.1 100.9L334.6 114.2L250.4 151.5Z" fill="#f4f4f4"/><path d="M334.6 114.2L338.6 158.1L250.4 151.5Z" fill="#dfdedd"/><path d="M-1.2 171.4L53.6 172.6L-4.9 199.0Z" fill="#fafafa"/><path d="M53.6 172.6L45.3 201.6L-4.9 199.0Z" fill="#ececec"/><path d="M53.6 172.6L95.8 169.0L45.3 201.6Z" fill="#dfdedd"/><path d="M95.8 169.0L94.0 207.6L45.3 201.6Z" fill="#dfdedd"/><path d="M95.8 169.0L152.8 173.1L94.0 207.6Z" fill="#ececec"/><path d="M152.8 173.1L158.4 217.1L94.0 207.6Z" fill="#e9e8e7"/><path d="M152.8 173.1L225.2 147.9L158.4 217.1Z" fill="#f1f1f1"/><path d="M225.2 147.9L217.3 217.9L158.4 217.1Z" fill="#f1f1f1"/><path d="M225.2 147.9L250.4 151.5L217.3 217.9Z" fill="#e6e5e4"/><path d="M250.4 151.5L279.3 219.7L217.3 217.9Z" fill="#f4f4f4"/><path d="M250.4 151.5L338.6 158.1L279.3 219.7Z" fill="#e9e8e7"/><path d="M338.6 158.1L326.9 194.9L279.3 219.7Z" fill="#e6e5e4"/><path d="M-4.9 199.0L45.3 201.6L4.4 263.9Z" fill="#f1f1f1"/><path d="M45.3 201.6L61.2 252.1L4.4 263.9Z" fill="#dfdedd"/><path d="M45.3 201.6L94.0 207.6L61.2 252.1Z" fill="#f4f4f4"/><path d="M94.0 207.6L108.6 241.3L61.2 252.1Z" fill="#e6e5e4"/><path d="M94.0 207.6L158.4 217.1L108.6 241.3Z" fill="#f4f4f4"/><path d="M158.4 217.1L168.3 252.2L108.6 241.3Z" fill="#e6e5e4"/><path d="M158.4 217.1L217.3 217.9L168.3 252.2Z" fill="#f1f1f1"/><path d="M217.3 217.9L201.4 236.9L168.3 252.2Z" fill="#fafafa"/><path d="M217.3 217.9L279.3 219.7L201.4 236.9Z" fill="#f1f1f1"/><path d="M279.3 219.7L279.2 264.7L201.4 236.9Z" fill="#f1f1f1"/><path d="M279.3 219.7L326.9 194.9L279.2 264.7Z" fill="#ececec"/><path d="M326.9 194.9L303.5 259.0L279.2 264.7Z" fill="#ececec"/><path d="M4.4 263.9L61.2 252.1L-13.6 284.5Z" fill="#e9e8e7"/><path d="M61.2 252.1L36.8 303.1L-13.6 284.5Z" fill="#f4f4f4"/><path d="M61.2 252.1L108.6 241.3L36.8 303.1Z" fill="#f4f4f4"/><path d="M108.6 241.3L114.9 281.3L36.8 303.1Z" fill="#f1f1f1"/><path d="M108.6 241.3L168.3 252.2L114.9 281.3Z" fill="#dfdedd"/><path d="M168.3 252.2L159.6 281.3L114.9 281.3Z" fill="#e6e5e4"/><path d="M168.3 252.2L201.4 236.9L159.6 281.3Z" fill="#fafafa"/><path d="M201.4 236.9L218.7 289.9L159.6 281.3Z" fill="#dfdedd"/><path d="M201.4 236.9L279.2 264.7L218.7 289.9Z" fill="#dfdedd"/><path d="M279.2 264.7L280.2 309.4L218.7 289.9Z" fill="#e6e5e4"/><path d="M279.2 264.7L303.5 259.0L280.2 309.4Z" fill="#ececec"/><path d="M303.5 259.0L320.2 310.0L280.2 309.4Z" fill="#f4f4f4"/><path d="M-13.6 284.5L36.8 303.1L-17.6 327.3Z" fill="#f1f1f1"/><path d="M36.8 303.1L49.0 325.9L-17.6 327.3Z" fill="#f1f1f1"/><path d="M36.8 303.1L114.9 281.3L49.0 325.9Z" fill="#e6e5e4"/><path d="M114.9 281.3L87.9 337.2L49.0 325.9Z" fill="#e9e8e7"/><path d="M114.9 281.3L159.6 281.3L87.9 337.2Z" fill="#fafafa"/><path d="M159.6 281.3L159.4 329.7L87.9 337.2Z" fill="#f4f4f4"/><path d="M159.6 281.3L218.7 289.9L159.4 329.7Z" fill="#e6e5e4"/><path d="M218.7 289.9L191.7 351.0L159.4 329.7Z" fill="#dfdedd"/><path d="M218.7 289.9L280.2 309.4L191.7 351.0Z" fill="#ececec"/><path d="M280.2 309.4L257.6 353.8L191.7 351.0Z" fill="#ececec"/><path d="M280.2 309.4L320.2 310.0L257.6 353.8Z" fill="#e9e8e7"/><path d="M320.2 310.0L335.9 336.3L257.6 353.8Z" fill="#e6e5e4"/><path d="M-17.6 327.3L49.0 325.9L-11.6 385.6Z" fill="#f4f4f4"/><path d="M49.0 325.9L50.8 387.9L-11.6 385.6Z" fill="#dfdedd"/><path d="M49.0 325.9L87.9 337.2L50.8 387.9Z" fill="#dfdedd"/><path d="M87.9 337.2L102.4 388.6L50.8 387.9Z" fill="#dfdedd"/><path d="M87.9 337.2L159.4 329.7L102.4 388.6Z" fill="#e9e8e7"/><path d="M159.4 329.7L172.6 385.2L102.4 388.6Z" fill="#e6e5e4"/><path d="M159.4 329.7L191.7 351.0L172.6 385.2Z" fill="#dfdedd"/><path d="M191.7 351.0L207.2 391.6L172.6 385.2Z" fill="#f4f4f4"/><path d="M191.7 351.0L257.6 353.8L207.2 391.6Z" fill="#f4f4f4"/><path d="M257.6 353.8L254.5 379.0L207.2 391.6Z" fill="#dfdedd"/><path d="M257.6 353.8L335.9 336.3L254.5 379.0Z" fill="#dfdedd"/><path d="M335.9 336.3L339.1 385.6L254.5 379.0Z" fill="#f1f1f1"/><path d="M-11.6 385.6L50.8 387.9L-8.1 415.3Z" fill="#ececec"/><path d="M50.8 387.9L41.6 432.4L-8.1 415.3Z" fill="#dfdedd"/><path d="M50.8 387.9L102.4 388.6L41.6 432.4Z" fill="#e9e8e7"/><path d="M102.4 388.6L80.8 433.5L41.6 432.4Z" fill="#f4f4f4"/><path d="M102.4 388.6L172.6 385.2L80.8 433.5Z" fill="#e9e8e7"/><path d="M172.6 385.2L160.3 416.8L80.8 433.5Z" fill="#e6e5e4"/><path d="M172.6 385.2L207.2 391.6L160.3 416.8Z" fill="#fafafa"/><path d="M207.2 391.6L215.1 429.0L160.3 416.8Z" fill="#f4f4f4"/><path d="M207.2 391.6L254.5 379.0L215.1 429.0Z" fill="#e9e8e7"/><path d="M254.5 379.0L272.2 425.6L215.1 429.0Z" fill="#dfdedd"/><path d="M254.5 379.0L339.1 385.6L272.2 425.6Z" fill="#dfdedd"/><path d="M339.1 385.6L328.3 437.1L272.2 425.6Z" fill="#f4f4f4"/></g><path d="M166 78L320 101V147Z" fill="#f4b81f"/><path d="M0 402L230 463L0 427Z" fill="#f4b81f"/><path d="M320 443L230 463L320 468Z" fill="#f4b81f"/></svg>
<div class="t" style="left:464px;top:150px;width:219.1px;text-align:left;font-size:29px;line-height:37px;color:#ffffff;direction:rtl;transform:scaleX(0.934);transform-origin:0 0;font-weight:bold;-webkit-text-stroke:1.2px #ffffff">خبرنگاری پارسیان</div>
<div class="t" style="left:493px;top:183px;width:142.2px;text-align:left;font-size:13px;line-height:16px;color:#ffffff;direction:rtl;transform:scaleX(0.912);transform-origin:0 0;">کارت شناسایی خبرنگاران</div>
<div class="t" style="left:504px;top:246px;width:151.5px;text-align:left;font-size:27px;line-height:35px;color:#6b5326;direction:rtl;transform:scaleX(0.875);transform-origin:0 0;font-weight:bold;-webkit-text-stroke:1px #6b5326">سعید محمدی</div>
<div class="t" style="left:508px;top:276px;width:144.2px;text-align:left;font-size:13px;line-height:16px;color:#7a5f2b;direction:rtl;transform:scaleX(0.927);transform-origin:0 0;">خبرنگار خبرنگاری پارسیان</div>
<svg class="s" style="left:510px;top:295px;" width="102" height="55" viewBox="0 0 102 55"><path d="M 6.5 37.4 C 12.2 30.6 19.9 16.8 24.1 16.0 C 25.6 16.4 24.4 19.9 18.3 23.7" fill="none" stroke="#161616" stroke-width="1" stroke-linecap="round"/><path d="M 17.6 22.9 C 11.5 27.5 8.4 35.9 15.3 35.9 C 19.9 35.9 22.9 34.4 25.2 32.8" fill="none" stroke="#161616" stroke-width="1" stroke-linecap="round"/><path d="M 22.9 34.4 C 27.5 30.6 32.1 25.2 42.8 16.0 C 51.9 8.4 55.0 3.1 45.8 4.6 C 34.4 6.9 19.1 15.3 13.8 22.9" fill="none" stroke="#161616" stroke-width="1" stroke-linecap="round"/><path d="M 19.1 34.4 C 22.9 29.0 27.5 29.8 29.0 33.6 C 30.6 35.9 32.8 30.6 34.4 32.8 C 35.9 35.9 38.2 32.1 39.7 33.6 C 42.8 35.9 42.8 29.0 45.8 33.6 C 47.4 35.9 49.7 32.1 51.9 34.0 C 53.5 35.9 55.0 31.3 58.1 33.6 C 60.4 35.9 61.9 29.0 64.9 33.6 C 66.5 35.9 68.0 30.6 70.3 34.0 C 72.6 35.9 74.9 32.1 77.2 34.4 C 79.4 35.9 81.0 35.1 82.5 34.4" fill="none" stroke="#161616" stroke-width="1" stroke-linecap="round"/><path d="M 33.6 32.8 C 39.7 26.7 61.1 18.3 62.6 20.6 C 63.4 22.9 53.5 26.7 42.8 29.0" fill="none" stroke="#161616" stroke-width="1" stroke-linecap="round"/><path d="M 77.2 35.1 C 84.0 30.6 94.7 19.9 95.5 22.9 C 96.3 26.0 87.9 32.8 85.6 35.1 C 96.3 38.2 95.5 45.8 76.4 46.6 C 64.9 47.0 57.3 45.8 51.9 48.1" fill="none" stroke="#161616" stroke-width="1" stroke-linecap="round"/><path d="M 38.2 36.7 C 29.0 41.3 26.0 49.7 30.6 48.9 C 35.1 48.1 42.8 44.3 45.8 42.4" fill="none" stroke="#161616" stroke-width="1" stroke-linecap="round"/></svg>
<div class="t" style="left:516px;top:351px;width:116px;text-align:left;font-size:12px;line-height:15px;color:#555555;direction:rtl;transform:scaleX(0.973);transform-origin:0 0;font-weight:bold;">کد ملی : ۲۵۴۰۰۰۰۰۰۰۰</div>
<div class="t" style="left:507px;top:366px;width:129.0px;text-align:left;font-size:12px;line-height:15px;color:#555555;direction:rtl;transform:scaleX(1.016);transform-origin:0 0;font-weight:bold;">تاریخ تولد : ۱۳۶۵ / ۱۲ / ۲۰</div>
<div class="t" style="left:527px;top:381px;width:101.3px;text-align:left;font-size:12px;line-height:15px;color:#555555;direction:rtl;transform:scaleX(0.874);transform-origin:0 0;font-weight:bold;">سابقه کار : ۱۰ سال</div>
<div class="t" style="left:435.6px;top:421.0px;width:306.7px;text-align:left;font-size:10px;line-height:13px;color:#6a6a6a;direction:rtl;transform:scaleX(0.854);transform-origin:0 0;">سعید محمدی : خبرنگار خبرگزاری وسطی با بیش از ۱۰ سال سابقه کار ، با</div>
<div class="t" style="left:435.6px;top:433.5px;width:304.3px;text-align:left;font-size:10px;line-height:13px;color:#6a6a6a;direction:rtl;transform:scaleX(0.860);transform-origin:0 0;">مدرک رسمی از وزارت فرهنگ و ارشاد اسلامی ، مورد تایید خبرنگاری صدا</div>
<div class="t" style="left:522px;top:446.0px;width:207.8px;text-align:left;font-size:10px;line-height:13px;color:#6a6a6a;direction:rtl;transform:scaleX(0.844);transform-origin:0 0;">و سیما ، مدیر شرکت و موسسه خبری عصر نوین.</div>
<div class="t" style="left:435px;top:458.5px;width:285.3px;text-align:left;font-size:10px;line-height:13px;color:#6a6a6a;direction:rtl;transform:scaleX(0.921);transform-origin:0 0;">عضویت در تیم خبرنگاران جوان و خبرگزاری صدا و سیما. عضویت در</div>
<div class="t" style="left:632.5px;top:471.0px;width:74.6px;text-align:left;font-size:10px;line-height:13px;color:#6a6a6a;direction:rtl;transform:scaleX(0.871);transform-origin:0 0;">کانون خبرنگاران.</div>
<div class="t" style="left:437.5px;top:483.5px;width:301.1px;text-align:left;font-size:10px;line-height:13px;color:#6a6a6a;direction:rtl;transform:scaleX(0.863);transform-origin:0 0;">بیش از ۱۰ سال سابقه آموزش خبرنگاری و کار در خبرگزاری های مختلف.</div>
<div class="a" style="left:705px;top:425.5px;width:5px;height:5px;background:#e3b63a;border-radius:50%"></div>
<div class="a" style="left:705px;top:459.5px;width:5px;height:5px;background:#e3b63a;border-radius:50%"></div>
<div class="a" style="left:705px;top:492.5px;width:5px;height:5px;background:#e3b63a;border-radius:50%"></div>
<div class="a" style="left:521px;top:511px;width:26px;height:26px;background:#111111;border-radius:50%"></div>
<div class="a" style="left:558px;top:511px;width:26px;height:26px;background:#111111;border-radius:50%"></div>
<div class="a" style="left:595px;top:511px;width:26px;height:26px;background:#111111;border-radius:50%"></div>
<svg class="s" style="left:528px;top:519px;" width="12" height="10" viewBox="0 0 12 10"><path d="M12 1.2C11.5 1.5 11 1.6 10.6 1.7C11.1 1.4 11.4 0.9 11.6 0.4C11.1 0.7 10.6 0.9 10.1 1C9.1 -0.1 7.3 0 6.4 1.1C5.9 1.7 5.8 2.5 6 3.2C4 3.1 2.1 2.1 0.8 0.6C0.1 1.7 0.5 3.2 1.5 3.9C1.1 3.9 0.8 3.8 0.5 3.6C0.5 4.8 1.3 5.8 2.5 6C2.1 6.1 1.7 6.1 1.4 6.1C1.7 7 2.6 7.7 3.6 7.7C2.6 8.5 1.3 8.9 0 8.8C5.5 12 12 8 11 2Z" fill="#ffffff"/></svg>
<svg class="s" style="left:567px;top:517px;" width="8" height="14" viewBox="0 0 8 14"><path d="M5 14V8H7L7.4 5.5H5V4C5 3.2 5.3 2.8 6.2 2.8H7.5V0.5C7 0.4 6.3 0.4 5.6 0.4C3.8 0.4 2.6 1.5 2.6 3.4V5.5H0.5V8H2.6V14Z" fill="#ffffff"/></svg>
<svg class="s" style="left:601px;top:519px;" width="14" height="10" viewBox="0 0 14 10"><rect x="0" y="0" width="14" height="10" rx="2.5" fill="#ffffff"/><path d="M5.5 2.5V7.5L9.5 5Z" fill="#111"/></svg>
<div class="t" style="left:544px;top:540px;width:63.3px;text-align:left;font-size:10px;line-height:13px;color:#555555;direction:rtl;transform:scaleX(0.894);transform-origin:0 0;">شبکه های من:</div>
<svg class="s" style="left:520px;top:553.5px;" width="100" height="11" viewBox="0 0 100 11"><circle cx="6.8" cy="6.2" r="1.9" fill="none" stroke="#6a6a6a" stroke-width="1.1"/><circle cx="35.8" cy="6.2" r="1.9" fill="none" stroke="#6a6a6a" stroke-width="1.1"/><circle cx="42.3" cy="6.2" r="1.9" fill="none" stroke="#6a6a6a" stroke-width="1.1"/><circle cx="49.6" cy="6.2" r="1.9" fill="none" stroke="#6a6a6a" stroke-width="1.1"/><circle cx="56.8" cy="6.2" r="1.9" fill="none" stroke="#6a6a6a" stroke-width="1.1"/><circle cx="64.0" cy="6.2" r="1.9" fill="none" stroke="#6a6a6a" stroke-width="1.1"/><circle cx="85.2" cy="6.2" r="1.9" fill="none" stroke="#6a6a6a" stroke-width="1.1"/><circle cx="91.7" cy="6.2" r="1.9" fill="none" stroke="#6a6a6a" stroke-width="1.1"/><path d="M17.8 9.5V3.5C17.8 1.8 14.5 1.8 14.5 3.8C14.5 5.8 17.8 5.8 17.8 4.5" fill="none" stroke="#6a6a6a" stroke-width="1.2"/><path d="M21.3 1V9.5" stroke="#6a6a6a" stroke-width="1.3"/><path d="M25 1L28 9.5L31 1" fill="none" stroke="#6a6a6a" stroke-width="1.2"/><path d="M69 9.5V1.5C69 3.5 71.5 3.5 72 1.5" fill="none" stroke="#6a6a6a" stroke-width="1.2"/><path d="M77.3 1.5C74.5 4 74 9 77.3 9C80.5 9 80 4 77.3 1.5Z" fill="none" stroke="#6a6a6a" stroke-width="1.2"/></svg>
<div class="a" style="left:485px;top:563px;width:171px;height:39px;background:#ffffff;"></div>
<svg class="s" style="left:485px;top:563px;" width="171" height="39" viewBox="0 0 171 39"><rect x="4" y="4" width="2" height="31" fill="#111"/><rect x="8.5" y="4" width="2" height="31" fill="#111"/><rect x="12.0" y="4" width="1" height="31" fill="#111"/><rect x="15.5" y="4" width="3" height="31" fill="#111"/><rect x="20.0" y="4" width="1" height="31" fill="#111"/><rect x="23.5" y="4" width="1.5" height="31" fill="#111"/><rect x="26.5" y="4" width="1" height="31" fill="#111"/><rect x="28.5" y="4" width="2.5" height="31" fill="#111"/><rect x="33.5" y="4" width="2" height="31" fill="#111"/><rect x="37.0" y="4" width="2.5" height="31" fill="#111"/><rect x="40.5" y="4" width="2.5" height="31" fill="#111"/><rect x="44.0" y="4" width="1" height="31" fill="#111"/><rect x="46.0" y="4" width="1" height="31" fill="#111"/><rect x="48.5" y="4" width="2.5" height="31" fill="#111"/><rect x="52.0" y="4" width="2" height="31" fill="#111"/><rect x="56.0" y="4" width="2" height="31" fill="#111"/><rect x="59.5" y="4" width="2.5" height="31" fill="#111"/><rect x="63.5" y="4" width="3" height="31" fill="#111"/><rect x="68.5" y="4" width="2" height="31" fill="#111"/><rect x="71.5" y="4" width="3" height="31" fill="#111"/><rect x="75.5" y="4" width="2" height="31" fill="#111"/><rect x="79.5" y="4" width="2" height="31" fill="#111"/><rect x="82.5" y="4" width="3" height="31" fill="#111"/><rect x="87.5" y="4" width="1.5" height="31" fill="#111"/><rect x="90.5" y="4" width="2.5" height="31" fill="#111"/><rect x="95.0" y="4" width="1" height="31" fill="#111"/><rect x="97.0" y="4" width="2.5" height="31" fill="#111"/><rect x="100.5" y="4" width="2" height="31" fill="#111"/><rect x="103.5" y="4" width="1.5" height="31" fill="#111"/><rect x="107.5" y="4" width="1" height="31" fill="#111"/><rect x="109.5" y="4" width="3" height="31" fill="#111"/><rect x="113.5" y="4" width="1" height="31" fill="#111"/><rect x="116.0" y="4" width="1" height="31" fill="#111"/><rect x="119.5" y="4" width="2" height="31" fill="#111"/><rect x="124.0" y="4" width="2" height="31" fill="#111"/><rect x="127.0" y="4" width="2.5" height="31" fill="#111"/><rect x="131.0" y="4" width="3" height="31" fill="#111"/><rect x="136.0" y="4" width="1.5" height="31" fill="#111"/><rect x="138.5" y="4" width="1.5" height="31" fill="#111"/><rect x="142.0" y="4" width="1" height="31" fill="#111"/><rect x="145.5" y="4" width="1" height="31" fill="#111"/><rect x="148.0" y="4" width="1" height="31" fill="#111"/><rect x="150.0" y="4" width="1" height="31" fill="#111"/><rect x="152.0" y="4" width="2" height="31" fill="#111"/><rect x="156.5" y="4" width="1" height="31" fill="#111"/><rect x="159.0" y="4" width="2" height="31" fill="#111"/><rect x="162.5" y="4" width="3" height="31" fill="#111"/></svg>
<div class="t" style="left:470px;top:611px;font-size:13px;line-height:14px;color:#ffffff;font-weight:bold;transform:scaleX(0.787);transform-origin:0 0;">0212540000000</div>
<div class="a" style="left:557px;top:612px;width:1px;height:10px;background:#dddddd;"></div>
<div class="t" style="left:572px;top:611px;font-size:13px;line-height:14px;color:#ffffff;font-weight:bold;transform:scaleX(0.652);transform-origin:0 0;">INFO@14KHORSHID.IR</div>
<div class="a" style="left:431px;top:99px;width:1px;height:591px;background:#4af7f7;"></div>
<div class="a" style="left:450px;top:99px;width:1px;height:591px;background:#4af7f7;"></div>
<div class="a" style="left:569px;top:99px;width:1px;height:591px;background:#4af7f7;"></div>
<div class="a" style="left:688px;top:99px;width:1px;height:591px;background:#4af7f7;"></div>
<div class="a" style="left:706px;top:99px;width:1px;height:591px;background:#4af7f7;"></div>
<div class="a" style="left:57px;top:161px;width:1027px;height:1px;background:#4af7f7;"></div>
<div class="a" style="left:57px;top:624px;width:1027px;height:1px;background:#4af7f7;"></div>
</body></html>
